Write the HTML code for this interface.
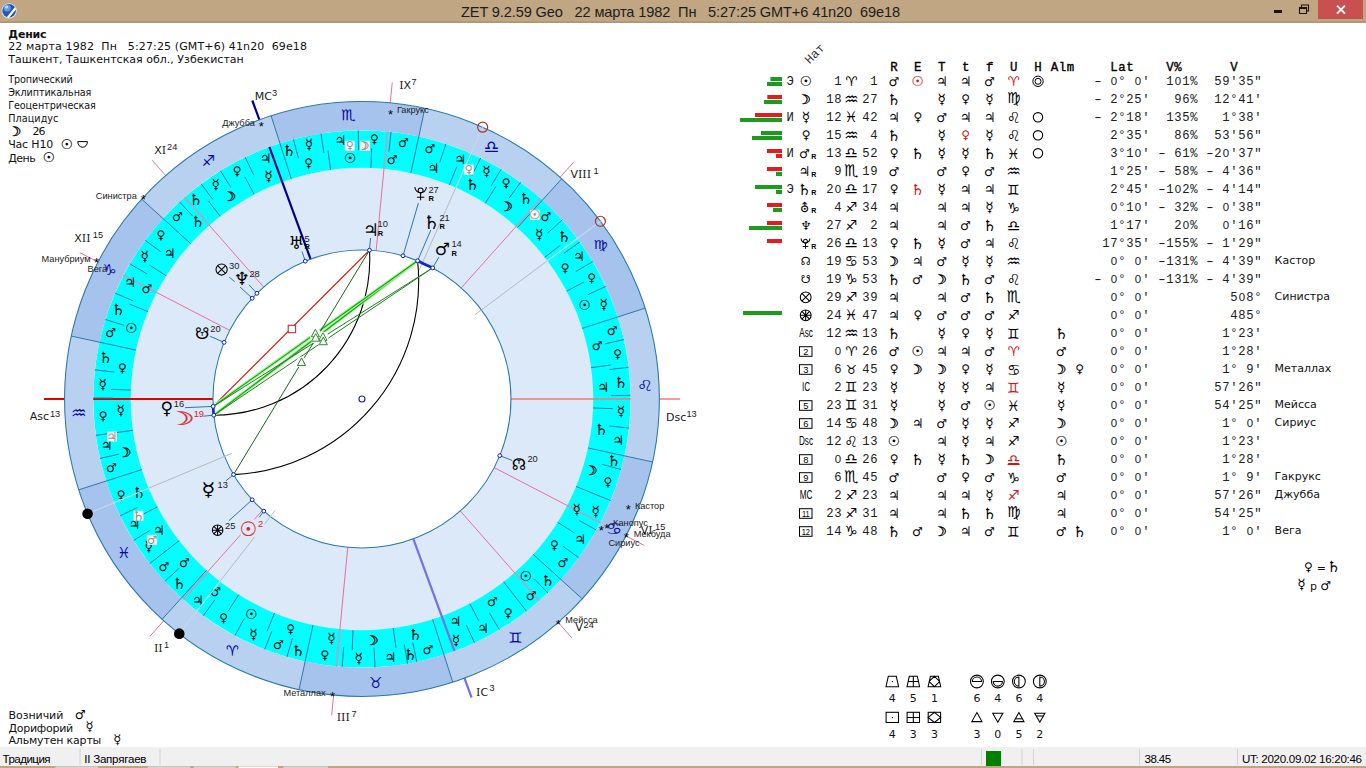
<!DOCTYPE html>
<html lang="ru"><head><meta charset="utf-8"><title>ZET 9.2.59 Geo</title>
<style>html,body{margin:0;padding:0;background:#fff;overflow:hidden}body{width:1366px;height:768px;position:relative}svg{position:absolute;left:0;top:0;display:block}text{white-space:pre}</style>
</head><body>
<svg width="1366" height="768" viewBox="0 0 1366 768">
<rect x="0" y="0" width="1366" height="768" fill="#fff"/>
<g id="wheel">
<circle cx="361.95" cy="399" r="268.6" fill="#00ffff"/>
<circle cx="361.95" cy="399" r="231.3" fill="#dce9f9"/>
<circle cx="361.95" cy="399" r="149" fill="#fff"/>
<line x1="212.95" y1="399" x2="43.95" y2="399" stroke="#e00000" stroke-width="2"/>
<line x1="262.67" y1="510.1" x2="150.06" y2="636.12" stroke="#e8709c" stroke-width="1"/>
<line x1="207.83" y1="571.47" x2="182.98" y2="599.29" stroke="#8fb4d0" stroke-width="2.1"/>
<line x1="347.76" y1="547.32" x2="331.66" y2="715.55" stroke="#e8709c" stroke-width="1"/>
<line x1="339.91" y1="629.25" x2="336.36" y2="666.38" stroke="#8fb4d0" stroke-width="2.1"/>
<line x1="413.32" y1="538.87" x2="471.58" y2="697.5" stroke="#7474e0" stroke-width="2.2"/>
<line x1="460.29" y1="510.94" x2="571.83" y2="637.9" stroke="#e8709c" stroke-width="1"/>
<line x1="514.61" y1="572.77" x2="539.23" y2="600.79" stroke="#8fb4d0" stroke-width="2.1"/>
<line x1="494.21" y1="467.61" x2="644.23" y2="545.43" stroke="#e8709c" stroke-width="1"/>
<line x1="567.27" y1="505.5" x2="600.38" y2="522.68" stroke="#8fb4d0" stroke-width="2.1"/>
<line x1="510.95" y1="399" x2="679.95" y2="399" stroke="#f07878" stroke-width="1.6"/>
<line x1="461.23" y1="287.9" x2="573.84" y2="161.88" stroke="#e8709c" stroke-width="1"/>
<line x1="516.07" y1="226.53" x2="540.92" y2="198.71" stroke="#8fb4d0" stroke-width="2.1"/>
<line x1="376.14" y1="250.68" x2="392.24" y2="82.45" stroke="#e8709c" stroke-width="1"/>
<line x1="383.99" y1="168.75" x2="387.54" y2="131.62" stroke="#8fb4d0" stroke-width="2.1"/>
<line x1="310.58" y1="259.13" x2="252.32" y2="100.5" stroke="#00008c" stroke-width="2.2"/>
<line x1="263.61" y1="287.06" x2="152.07" y2="160.1" stroke="#e8709c" stroke-width="1"/>
<line x1="209.29" y1="225.23" x2="184.67" y2="197.21" stroke="#8fb4d0" stroke-width="2.1"/>
<line x1="229.69" y1="330.39" x2="79.67" y2="252.57" stroke="#e8709c" stroke-width="1"/>
<line x1="156.63" y1="292.5" x2="123.52" y2="275.32" stroke="#8fb4d0" stroke-width="2.1"/>
<path d="M162.12 619.26A297.4 297.4 0 0 0 299.02 689.67L305.11 661.52A268.6 268.6 0 0 1 181.47 597.93Z" fill="#b9d1f1"/>
<path d="M299.02 689.67A297.4 297.4 0 0 0 452.78 682.19L443.99 654.77A268.6 268.6 0 0 1 305.11 661.52Z" fill="#a6c3ee"/>
<path d="M452.78 682.19A297.4 297.4 0 0 0 582.21 598.83L560.88 579.48A268.6 268.6 0 0 1 443.99 654.77Z" fill="#b9d1f1"/>
<path d="M582.21 598.83A297.4 297.4 0 0 0 652.62 461.93L624.47 455.84A268.6 268.6 0 0 1 560.88 579.48Z" fill="#a6c3ee"/>
<path d="M652.62 461.93A297.4 297.4 0 0 0 645.14 308.17L617.72 316.96A268.6 268.6 0 0 1 624.47 455.84Z" fill="#b9d1f1"/>
<path d="M645.14 308.17A297.4 297.4 0 0 0 561.78 178.74L542.43 200.07A268.6 268.6 0 0 1 617.72 316.96Z" fill="#a6c3ee"/>
<path d="M561.78 178.74A297.4 297.4 0 0 0 424.88 108.33L418.79 136.48A268.6 268.6 0 0 1 542.43 200.07Z" fill="#b9d1f1"/>
<path d="M424.88 108.33A297.4 297.4 0 0 0 271.12 115.81L279.91 143.23A268.6 268.6 0 0 1 418.79 136.48Z" fill="#a6c3ee"/>
<path d="M271.12 115.81A297.4 297.4 0 0 0 141.69 199.17L163.02 218.52A268.6 268.6 0 0 1 279.91 143.23Z" fill="#b9d1f1"/>
<path d="M141.69 199.17A297.4 297.4 0 0 0 71.28 336.07L99.43 342.16A268.6 268.6 0 0 1 163.02 218.52Z" fill="#a6c3ee"/>
<path d="M71.28 336.07A297.4 297.4 0 0 0 78.76 489.83L106.18 481.04A268.6 268.6 0 0 1 99.43 342.16Z" fill="#b9d1f1"/>
<path d="M78.76 489.83A297.4 297.4 0 0 0 162.12 619.26L181.47 597.93A268.6 268.6 0 0 1 106.18 481.04Z" fill="#a6c3ee"/>
<circle cx="361.95" cy="399" r="297.4" fill="none" stroke="#2a78a8" stroke-width="1.05"/>
<circle cx="361.95" cy="399" r="149" fill="none" stroke="#2a78a8" stroke-width="1.05"/>
<line x1="206.53" y1="570.3" x2="162.12" y2="619.26" stroke="#2a78a8" stroke-width="1"/>
<line x1="313" y1="625.06" x2="299.02" y2="689.67" stroke="#2a78a8" stroke-width="1"/>
<line x1="432.59" y1="619.25" x2="452.78" y2="682.19" stroke="#2a78a8" stroke-width="1"/>
<line x1="533.25" y1="554.42" x2="582.21" y2="598.83" stroke="#2a78a8" stroke-width="1"/>
<line x1="588.01" y1="447.95" x2="652.62" y2="461.93" stroke="#2a78a8" stroke-width="1"/>
<line x1="582.2" y1="328.36" x2="645.14" y2="308.17" stroke="#2a78a8" stroke-width="1"/>
<line x1="517.37" y1="227.7" x2="561.78" y2="178.74" stroke="#2a78a8" stroke-width="1"/>
<line x1="410.9" y1="172.94" x2="424.88" y2="108.33" stroke="#2a78a8" stroke-width="1"/>
<line x1="291.31" y1="178.75" x2="271.12" y2="115.81" stroke="#2a78a8" stroke-width="1"/>
<line x1="190.65" y1="243.58" x2="141.69" y2="199.17" stroke="#2a78a8" stroke-width="1"/>
<line x1="135.89" y1="350.05" x2="71.28" y2="336.07" stroke="#2a78a8" stroke-width="1"/>
<line x1="141.7" y1="469.64" x2="78.76" y2="489.83" stroke="#2a78a8" stroke-width="1"/>
<line x1="214.83" y1="599.89" x2="203.25" y2="615.7" stroke="#2a78a8" stroke-width="1"/>
<line x1="244.22" y1="618.41" x2="234.95" y2="635.68" stroke="#2a78a8" stroke-width="1"/>
<line x1="271.84" y1="631.12" x2="264.74" y2="649.39" stroke="#2a78a8" stroke-width="1"/>
<line x1="292.41" y1="638.09" x2="286.94" y2="656.91" stroke="#2a78a8" stroke-width="1"/>
<line x1="238.64" y1="594.69" x2="228.14" y2="611.36" stroke="#2a78a8" stroke-width="1"/>
<line x1="274.49" y1="613.13" x2="267.04" y2="631.37" stroke="#2a78a8" stroke-width="1"/>
<line x1="343.64" y1="647.33" x2="342.2" y2="666.87" stroke="#2a78a8" stroke-width="1"/>
<line x1="374.04" y1="647.71" x2="374.99" y2="667.28" stroke="#2a78a8" stroke-width="1"/>
<line x1="404.26" y1="644.38" x2="407.59" y2="663.69" stroke="#2a78a8" stroke-width="1"/>
<line x1="412.8" y1="642.75" x2="416.8" y2="661.94" stroke="#2a78a8" stroke-width="1"/>
<line x1="353" y1="630.13" x2="352.24" y2="649.81" stroke="#2a78a8" stroke-width="1"/>
<line x1="393.27" y1="628.17" x2="395.94" y2="647.69" stroke="#2a78a8" stroke-width="1"/>
<line x1="466.33" y1="625.07" x2="474.54" y2="642.86" stroke="#2a78a8" stroke-width="1"/>
<line x1="489.39" y1="612.92" x2="499.42" y2="629.76" stroke="#2a78a8" stroke-width="1"/>
<line x1="514.51" y1="595.79" x2="526.52" y2="611.28" stroke="#2a78a8" stroke-width="1"/>
<line x1="534.24" y1="578.77" x2="547.8" y2="592.92" stroke="#2a78a8" stroke-width="1"/>
<line x1="469.77" y1="603.63" x2="478.95" y2="621.06" stroke="#2a78a8" stroke-width="1"/>
<line x1="503.66" y1="581.8" x2="515.73" y2="597.37" stroke="#2a78a8" stroke-width="1"/>
<line x1="562.84" y1="546.12" x2="578.65" y2="557.7" stroke="#2a78a8" stroke-width="1"/>
<line x1="579.27" y1="520.54" x2="596.38" y2="530.11" stroke="#2a78a8" stroke-width="1"/>
<line x1="592.46" y1="493.15" x2="610.61" y2="500.56" stroke="#2a78a8" stroke-width="1"/>
<line x1="602.22" y1="464.35" x2="621.13" y2="469.5" stroke="#2a78a8" stroke-width="1"/>
<line x1="557.64" y1="522.31" x2="574.31" y2="532.81" stroke="#2a78a8" stroke-width="1"/>
<line x1="576.08" y1="486.46" x2="594.32" y2="493.91" stroke="#2a78a8" stroke-width="1"/>
<line x1="609.49" y1="425.96" x2="628.97" y2="428.09" stroke="#2a78a8" stroke-width="1"/>
<line x1="610.93" y1="395.6" x2="630.52" y2="395.33" stroke="#2a78a8" stroke-width="1"/>
<line x1="609.21" y1="369.59" x2="628.67" y2="367.27" stroke="#2a78a8" stroke-width="1"/>
<line x1="604.78" y1="343.91" x2="623.89" y2="339.57" stroke="#2a78a8" stroke-width="1"/>
<line x1="593.08" y1="407.95" x2="612.76" y2="408.71" stroke="#2a78a8" stroke-width="1"/>
<line x1="591.12" y1="367.68" x2="610.64" y2="365.01" stroke="#2a78a8" stroke-width="1"/>
<line x1="588.02" y1="294.62" x2="605.81" y2="286.41" stroke="#2a78a8" stroke-width="1"/>
<line x1="575.87" y1="271.56" x2="592.71" y2="261.53" stroke="#2a78a8" stroke-width="1"/>
<line x1="563.95" y1="253.4" x2="579.85" y2="241.94" stroke="#2a78a8" stroke-width="1"/>
<line x1="547.62" y1="233.09" x2="562.24" y2="220.03" stroke="#2a78a8" stroke-width="1"/>
<line x1="566.58" y1="291.18" x2="584.01" y2="282" stroke="#2a78a8" stroke-width="1"/>
<line x1="544.75" y1="257.29" x2="560.32" y2="245.22" stroke="#2a78a8" stroke-width="1"/>
<line x1="509.07" y1="198.11" x2="520.65" y2="182.3" stroke="#2a78a8" stroke-width="1"/>
<line x1="491" y1="186.05" x2="501.16" y2="169.29" stroke="#2a78a8" stroke-width="1"/>
<line x1="471.95" y1="175.61" x2="480.61" y2="158.03" stroke="#2a78a8" stroke-width="1"/>
<line x1="439.79" y1="162.48" x2="445.92" y2="143.86" stroke="#2a78a8" stroke-width="1"/>
<line x1="485.26" y1="203.31" x2="495.76" y2="186.64" stroke="#2a78a8" stroke-width="1"/>
<line x1="449.41" y1="184.87" x2="456.86" y2="166.63" stroke="#2a78a8" stroke-width="1"/>
<line x1="388.91" y1="151.46" x2="391.04" y2="131.98" stroke="#2a78a8" stroke-width="1"/>
<line x1="358.55" y1="150.02" x2="358.28" y2="130.43" stroke="#2a78a8" stroke-width="1"/>
<line x1="323.93" y1="152.92" x2="320.94" y2="133.55" stroke="#2a78a8" stroke-width="1"/>
<line x1="298.41" y1="158.24" x2="293.41" y2="139.29" stroke="#2a78a8" stroke-width="1"/>
<line x1="370.9" y1="167.87" x2="371.66" y2="148.19" stroke="#2a78a8" stroke-width="1"/>
<line x1="330.63" y1="169.83" x2="327.96" y2="150.31" stroke="#2a78a8" stroke-width="1"/>
<line x1="253.64" y1="174.79" x2="245.12" y2="157.14" stroke="#2a78a8" stroke-width="1"/>
<line x1="230.8" y1="187.34" x2="220.48" y2="170.68" stroke="#2a78a8" stroke-width="1"/>
<line x1="212.85" y1="199.57" x2="201.11" y2="183.88" stroke="#2a78a8" stroke-width="1"/>
<line x1="192.82" y1="216.25" x2="179.51" y2="201.87" stroke="#2a78a8" stroke-width="1"/>
<line x1="254.13" y1="194.37" x2="244.95" y2="176.94" stroke="#2a78a8" stroke-width="1"/>
<line x1="220.24" y1="216.2" x2="208.17" y2="200.63" stroke="#2a78a8" stroke-width="1"/>
<line x1="161.06" y1="251.88" x2="145.25" y2="240.3" stroke="#2a78a8" stroke-width="1"/>
<line x1="146.78" y1="273.69" x2="129.85" y2="263.82" stroke="#2a78a8" stroke-width="1"/>
<line x1="133.11" y1="300.84" x2="115.1" y2="293.12" stroke="#2a78a8" stroke-width="1"/>
<line x1="124.11" y1="325.3" x2="105.39" y2="319.5" stroke="#2a78a8" stroke-width="1"/>
<line x1="166.26" y1="275.69" x2="149.59" y2="265.19" stroke="#2a78a8" stroke-width="1"/>
<line x1="147.82" y1="311.54" x2="129.58" y2="304.09" stroke="#2a78a8" stroke-width="1"/>
<line x1="114.41" y1="372.04" x2="94.93" y2="369.91" stroke="#2a78a8" stroke-width="1"/>
<line x1="112.95" y1="398.06" x2="93.35" y2="397.98" stroke="#2a78a8" stroke-width="1"/>
<line x1="115.24" y1="432.72" x2="95.82" y2="435.38" stroke="#2a78a8" stroke-width="1"/>
<line x1="119.12" y1="454.09" x2="100.01" y2="458.43" stroke="#2a78a8" stroke-width="1"/>
<line x1="130.82" y1="390.05" x2="111.14" y2="389.29" stroke="#2a78a8" stroke-width="1"/>
<line x1="132.78" y1="430.32" x2="113.26" y2="432.99" stroke="#2a78a8" stroke-width="1"/>
<line x1="137.74" y1="507.31" x2="120.09" y2="515.83" stroke="#2a78a8" stroke-width="1"/>
<line x1="150.29" y1="530.15" x2="133.63" y2="540.47" stroke="#2a78a8" stroke-width="1"/>
<line x1="165.16" y1="551.56" x2="149.67" y2="563.57" stroke="#2a78a8" stroke-width="1"/>
<line x1="179.2" y1="568.13" x2="164.82" y2="581.44" stroke="#2a78a8" stroke-width="1"/>
<line x1="157.32" y1="506.82" x2="139.89" y2="516" stroke="#2a78a8" stroke-width="1"/>
<line x1="179.15" y1="540.71" x2="163.58" y2="552.78" stroke="#2a78a8" stroke-width="1"/>
<text x="191.97" y="604.87" font-family='"DejaVu Sans", sans-serif' font-size="13.2" fill="#000">♃</text>
<text x="219.28" y="622.12" font-family='"DejaVu Sans", sans-serif' font-size="11.8" fill="#000">♀</text>
<text x="249.15" y="639.14" font-family='"DejaVu Sans", sans-serif' font-size="14" fill="#000">☿</text>
<text x="273.08" y="649.12" font-family='"DejaVu Sans", sans-serif' font-size="12.3" fill="#000">♂</text>
<text x="291.28" y="656.21" font-family='"DejaVu Sans", sans-serif' font-size="15.5" fill="#000">♄</text>
<text x="210.29" y="595.66" font-family='"DejaVu Sans", sans-serif' font-size="12.3" fill="#000">♂</text>
<text x="245.36" y="618.77" font-family='"DejaVu Sans", sans-serif' font-size="13.7" fill="#000" stroke="#000" stroke-width="0.2">☉</text>
<text x="286.15" y="633.25" font-family='"DejaVu Sans", sans-serif' font-size="11.8" fill="#000">♀</text>
<text x="320.54" y="659.41" font-family='"DejaVu Sans", sans-serif' font-size="11.8" fill="#000">♀</text>
<text x="354.41" y="662.89" font-family='"DejaVu Sans", sans-serif' font-size="14" fill="#000">☿</text>
<text x="384.44" y="661.76" font-family='"DejaVu Sans", sans-serif' font-size="13.2" fill="#000">♃</text>
<text x="403.56" y="659.58" font-family='"DejaVu Sans", sans-serif' font-size="15.5" fill="#000">♄</text>
<text x="422.57" y="654.25" font-family='"DejaVu Sans", sans-serif' font-size="12.3" fill="#000">♂</text>
<text x="327.32" y="643" font-family='"DejaVu Sans", sans-serif' font-size="14" fill="#000">☿</text>
<text transform="translate(373.68 640.22) scale(1.3 1)" x="-7.62" y="4.74" font-family='"DejaVu Sans", sans-serif' font-size="13" fill="#000" stroke="#000" stroke-width="0.3">☽</text>
<text x="408.45" y="640.18" font-family='"DejaVu Sans", sans-serif' font-size="15.5" fill="#000">♄</text>
<text x="451.85" y="645.21" font-family='"DejaVu Sans", sans-serif' font-size="14" fill="#000">☿</text>
<text x="477" y="633.41" font-family='"DejaVu Sans", sans-serif' font-size="13.2" fill="#000">♃</text>
<text x="503.8" y="616.99" font-family='"DejaVu Sans", sans-serif' font-size="11.8" fill="#000">♀</text>
<text x="525.86" y="599.83" font-family='"DejaVu Sans", sans-serif' font-size="12.3" fill="#000">♂</text>
<text x="541" y="585.63" font-family='"DejaVu Sans", sans-serif' font-size="15.5" fill="#000">♄</text>
<text x="449.56" y="626.48" font-family='"DejaVu Sans", sans-serif' font-size="13.2" fill="#000">♃</text>
<text x="487.12" y="606.38" font-family='"DejaVu Sans", sans-serif' font-size="12.3" fill="#000">♂</text>
<text x="519.84" y="581.25" font-family='"DejaVu Sans", sans-serif' font-size="13.7" fill="#000" stroke="#000" stroke-width="0.2">☉</text>
<text x="557.41" y="567.41" font-family='"DejaVu Sans", sans-serif' font-size="12.3" fill="#000">♂</text>
<text x="574.37" y="544.08" font-family='"DejaVu Sans", sans-serif' font-size="13.2" fill="#000">♃</text>
<text x="591.45" y="516.02" font-family='"DejaVu Sans", sans-serif' font-size="14" fill="#000">☿</text>
<text x="603.41" y="485.85" font-family='"DejaVu Sans", sans-serif' font-size="11.8" fill="#000">♀</text>
<text x="607.11" y="466.19" font-family='"DejaVu Sans", sans-serif' font-size="15.5" fill="#000">♄</text>
<text x="549.95" y="548.64" font-family='"DejaVu Sans", sans-serif' font-size="11.8" fill="#000">♀</text>
<text x="572.42" y="513.86" font-family='"DejaVu Sans", sans-serif' font-size="14" fill="#000">☿</text>
<text transform="translate(592.63 470.48) scale(1.3 1)" x="-7.62" y="4.74" font-family='"DejaVu Sans", sans-serif' font-size="13" fill="#000" stroke="#000" stroke-width="0.3">☽</text>
<text x="612.19" y="445.38" font-family='"DejaVu Sans", sans-serif' font-size="13.2" fill="#000">♃</text>
<text x="616.86" y="415.71" font-family='"DejaVu Sans", sans-serif' font-size="14" fill="#000">☿</text>
<text x="613.94" y="387.54" font-family='"DejaVu Sans", sans-serif' font-size="15.5" fill="#000">♄</text>
<text x="613.35" y="358.48" font-family='"DejaVu Sans", sans-serif' font-size="11.8" fill="#000">♀</text>
<text x="606.68" y="334.94" font-family='"DejaVu Sans", sans-serif' font-size="12.3" fill="#000">♂</text>
<text x="594.6" y="435" font-family='"DejaVu Sans", sans-serif' font-size="15.5" fill="#000">♄</text>
<text x="597.25" y="392.09" font-family='"DejaVu Sans", sans-serif' font-size="13.2" fill="#000">♃</text>
<text x="591.87" y="349.91" font-family='"DejaVu Sans", sans-serif' font-size="12.3" fill="#000">♂</text>
<text x="599.45" y="309.22" font-family='"DejaVu Sans", sans-serif' font-size="14" fill="#000">☿</text>
<text x="587.21" y="281.61" font-family='"DejaVu Sans", sans-serif' font-size="11.8" fill="#000">♀</text>
<text x="572.97" y="261.41" font-family='"DejaVu Sans", sans-serif' font-size="13.2" fill="#000">♃</text>
<text x="557.3" y="242.12" font-family='"DejaVu Sans", sans-serif' font-size="15.5" fill="#000">♄</text>
<text x="540.54" y="220.54" font-family='"DejaVu Sans", sans-serif' font-size="12.3" fill="#000">♂</text>
<text x="578.47" y="310.48" font-family='"DejaVu Sans", sans-serif' font-size="13.7" fill="#000" stroke="#000" stroke-width="0.2">☉</text>
<text x="560.66" y="271.81" font-family='"DejaVu Sans", sans-serif' font-size="11.8" fill="#000">♀</text>
<text x="534.9" y="239.38" font-family='"DejaVu Sans", sans-serif' font-size="14" fill="#000">☿</text>
<text x="519.08" y="203.61" font-family='"DejaVu Sans", sans-serif' font-size="15.5" fill="#000">♄</text>
<text x="501.67" y="186.72" font-family='"DejaVu Sans", sans-serif' font-size="11.8" fill="#000">♀</text>
<text x="482.34" y="175.83" font-family='"DejaVu Sans", sans-serif' font-size="14" fill="#000">☿</text>
<text x="454.16" y="163.59" font-family='"DejaVu Sans", sans-serif' font-size="13.2" fill="#000">♃</text>
<text x="424.47" y="152.94" font-family='"DejaVu Sans", sans-serif' font-size="12.3" fill="#000">♂</text>
<text transform="translate(508.02 206.68) scale(1.3 1)" x="-7.62" y="4.74" font-family='"DejaVu Sans", sans-serif' font-size="13" fill="#000" stroke="#000" stroke-width="0.3">☽</text>
<text x="465.46" y="189.9" font-family='"DejaVu Sans", sans-serif' font-size="15.5" fill="#000">♄</text>
<text x="427.52" y="173.14" font-family='"DejaVu Sans", sans-serif' font-size="13.2" fill="#000">♃</text>
<text x="397.92" y="147.19" font-family='"DejaVu Sans", sans-serif' font-size="12.3" fill="#000">♂</text>
<text x="369.93" y="143.37" font-family='"DejaVu Sans", sans-serif' font-size="11.8" fill="#000">♀</text>
<text x="334.4" y="145.22" font-family='"DejaVu Sans", sans-serif' font-size="13.2" fill="#000">♃</text>
<text x="304.66" y="149.38" font-family='"DejaVu Sans", sans-serif' font-size="14" fill="#000">☿</text>
<text x="282.25" y="155.57" font-family='"DejaVu Sans", sans-serif' font-size="15.5" fill="#000">♄</text>
<text x="386.69" y="163.76" font-family='"DejaVu Sans", sans-serif' font-size="12.3" fill="#000">♂</text>
<text x="344.08" y="162.79" font-family='"DejaVu Sans", sans-serif' font-size="13.7" fill="#000" stroke="#000" stroke-width="0.2">☉</text>
<text x="304.19" y="167.06" font-family='"DejaVu Sans", sans-serif' font-size="11.8" fill="#000">♀</text>
<text x="259.74" y="162.85" font-family='"DejaVu Sans", sans-serif' font-size="13.2" fill="#000">♃</text>
<text x="232.68" y="175.14" font-family='"DejaVu Sans", sans-serif' font-size="11.8" fill="#000">♀</text>
<text x="211.48" y="189" font-family='"DejaVu Sans", sans-serif' font-size="14" fill="#000">☿</text>
<text x="188.96" y="205.24" font-family='"DejaVu Sans", sans-serif' font-size="15.5" fill="#000">♄</text>
<text x="171.96" y="220.76" font-family='"DejaVu Sans", sans-serif' font-size="12.3" fill="#000">♂</text>
<text x="264.13" y="180.76" font-family='"DejaVu Sans", sans-serif' font-size="14" fill="#000">☿</text>
<text transform="translate(231.19 195.97) scale(1.3 1)" x="-7.62" y="4.74" font-family='"DejaVu Sans", sans-serif' font-size="13" fill="#000" stroke="#000" stroke-width="0.3">☽</text>
<text x="190.98" y="227.42" font-family='"DejaVu Sans", sans-serif' font-size="15.5" fill="#000">♄</text>
<text x="156.58" y="238.51" font-family='"DejaVu Sans", sans-serif' font-size="11.8" fill="#000">♀</text>
<text x="140.55" y="261.26" font-family='"DejaVu Sans", sans-serif' font-size="14" fill="#000">☿</text>
<text x="124.24" y="287.16" font-family='"DejaVu Sans", sans-serif' font-size="13.2" fill="#000">♃</text>
<text x="111.5" y="314.99" font-family='"DejaVu Sans", sans-serif' font-size="15.5" fill="#000">♄</text>
<text x="105.37" y="337.42" font-family='"DejaVu Sans", sans-serif' font-size="12.3" fill="#000">♂</text>
<text x="163.72" y="257.75" font-family='"DejaVu Sans", sans-serif' font-size="13.2" fill="#000">♃</text>
<text x="141.59" y="292.89" font-family='"DejaVu Sans", sans-serif' font-size="12.3" fill="#000">♂</text>
<text x="125.13" y="332.52" font-family='"DejaVu Sans", sans-serif' font-size="13.7" fill="#000" stroke="#000" stroke-width="0.2">☉</text>
<text x="98.86" y="363.1" font-family='"DejaVu Sans", sans-serif' font-size="15.5" fill="#000">♄</text>
<text x="98.56" y="388.85" font-family='"DejaVu Sans", sans-serif' font-size="14" fill="#000">☿</text>
<text x="98.69" y="419.7" font-family='"DejaVu Sans", sans-serif' font-size="11.8" fill="#000">♀</text>
<text x="100.71" y="450.15" font-family='"DejaVu Sans", sans-serif' font-size="13.2" fill="#000">♃</text>
<text x="106.03" y="471.74" font-family='"DejaVu Sans", sans-serif' font-size="12.3" fill="#000">♂</text>
<text x="118.04" y="372.24" font-family='"DejaVu Sans", sans-serif' font-size="11.8" fill="#000">♀</text>
<text x="116.44" y="415.14" font-family='"DejaVu Sans", sans-serif' font-size="14" fill="#000">☿</text>
<text transform="translate(126.44 452.44) scale(1.3 1)" x="-7.62" y="4.74" font-family='"DejaVu Sans", sans-serif' font-size="13" fill="#000" stroke="#000" stroke-width="0.3">☽</text>
<text x="116.66" y="498.88" font-family='"DejaVu Sans", sans-serif' font-size="11.8" fill="#000">♀</text>
<text x="128.6" y="528.77" font-family='"DejaVu Sans", sans-serif' font-size="13.2" fill="#000">♃</text>
<text x="144.52" y="551.45" font-family='"DejaVu Sans", sans-serif' font-size="14" fill="#000">☿</text>
<text x="158.39" y="571.13" font-family='"DejaVu Sans", sans-serif' font-size="12.3" fill="#000">♂</text>
<text x="172.43" y="589.06" font-family='"DejaVu Sans", sans-serif' font-size="15.5" fill="#000">♄</text>
<text x="132.35" y="498.18" font-family='"DejaVu Sans", sans-serif' font-size="15.5" fill="#000">♄</text>
<text x="153" y="534.58" font-family='"DejaVu Sans", sans-serif' font-size="13.2" fill="#000">♃</text>
<text x="179.11" y="567.38" font-family='"DejaVu Sans", sans-serif' font-size="12.3" fill="#000">♂</text>
<text x="225.79" y="656.41" font-family='"DejaVu Sans", sans-serif' font-size="14.5" fill="#0a0a9a">♈</text>
<text x="368.99" y="687.64" font-family='"DejaVu Sans", sans-serif' font-size="15" fill="#0a0a9a">♉</text>
<text transform="translate(515.45 637.35) scale(1.1 1)" x="-6.72" y="5.49" font-family='"DejaVu Sans", sans-serif' font-size="15" fill="#0a0a9a">♊</text>
<text transform="translate(614.06 528.66) scale(1.2 1)" x="-6.95" y="5.51" font-family='"DejaVu Sans", sans-serif' font-size="15.5" fill="#0a0a9a">♋</text>
<text transform="translate(645.12 385.23) scale(1.2 1)" x="-6.94" y="5.66" font-family='"DejaVu Sans", sans-serif' font-size="15.5" fill="#0a0a9a">♌</text>
<text transform="translate(600.3 245.5) scale(1.3 1)" x="-5.6" y="3.44" font-family='"DejaVu Sans", sans-serif' font-size="12.5" fill="#0a0a9a">♍</text>
<text x="483.77" y="153.06" font-family='"DejaVu Sans", sans-serif' font-size="17.5" fill="#0a0a9a">♎</text>
<text transform="translate(348.18 115.83) scale(1.15 1)" x="-6.5" y="4.6" font-family='"DejaVu Sans", sans-serif' font-size="14.5" fill="#0a0a9a">♏</text>
<text x="201.73" y="166.13" font-family='"DejaVu Sans", sans-serif' font-size="15" fill="#0a0a9a">♐</text>
<text transform="translate(109.84 269.34) scale(1.05 1)" x="-6.72" y="5.48" font-family='"DejaVu Sans", sans-serif' font-size="15" fill="#0a0a9a">♑</text>
<text x="70.94" y="419.17" font-family='"DejaVu Sans", sans-serif' font-size="17.5" fill="#0a0a9a">♒</text>
<text x="116.88" y="557.98" font-family='"DejaVu Sans", sans-serif' font-size="15" fill="#0a0a9a">♓</text>
<line x1="419.19" y1="270.14" x2="455.84" y2="187.61" stroke="#b4b4b4" stroke-width="1" stroke-opacity="0.9"/>
<line x1="455.84" y1="187.61" x2="470.99" y2="153.53" stroke="#c4ecec" stroke-width="1.2"/>
<line x1="470.99" y1="153.53" x2="482.68" y2="127.21" stroke="#c8d6ea" stroke-width="1.1"/>
<circle cx="482.68" cy="127.21" r="5" fill="none" stroke="#b03030" stroke-width="1.2"/>
<line x1="475" y1="314.73" x2="547.4" y2="260.77" stroke="#b4b4b4" stroke-width="1" stroke-opacity="0.9"/>
<line x1="547.4" y1="260.77" x2="577.31" y2="238.48" stroke="#c4ecec" stroke-width="1.2"/>
<line x1="577.31" y1="238.48" x2="600.4" y2="221.27" stroke="#c8d6ea" stroke-width="1.1"/>
<circle cx="600.4" cy="221.27" r="5" fill="none" stroke="#b03030" stroke-width="1.2"/>
<line x1="231.87" y1="453.41" x2="148.57" y2="488.26" stroke="#b4b4b4" stroke-width="1" stroke-opacity="0.9"/>
<line x1="148.57" y1="488.26" x2="114.16" y2="502.65" stroke="#c4ecec" stroke-width="1.2"/>
<line x1="114.16" y1="502.65" x2="87.59" y2="513.77" stroke="#c8d6ea" stroke-width="1.1"/>
<circle cx="87.59" cy="513.77" r="5.3" fill="#000"/>
<line x1="275.34" y1="510.26" x2="219.87" y2="581.52" stroke="#b4b4b4" stroke-width="1" stroke-opacity="0.9"/>
<line x1="219.87" y1="581.52" x2="196.95" y2="610.95" stroke="#c4ecec" stroke-width="1.2"/>
<line x1="196.95" y1="610.95" x2="179.26" y2="633.67" stroke="#c8d6ea" stroke-width="1.1"/>
<circle cx="179.26" cy="633.67" r="5.3" fill="#000"/>
<rect x="344.9" y="140.8" width="9.8" height="10" fill="#f0fafa"/>
<text x="345.78" y="149.12" font-family='"DejaVu Sans", sans-serif' font-size="10.97" fill="#a08c8c">♀</text>
<rect x="360.1" y="140.8" width="9.8" height="10" fill="#f0fafa"/>
<text transform="translate(365 145.8) scale(1.3 1)" x="-7.08" y="4.41" font-family='"DejaVu Sans", sans-serif' font-size="12.09" fill="#a08c8c" stroke="#a08c8c" stroke-width="0.3">☽</text>
<rect x="463.9" y="164.6" width="9.8" height="10" fill="#f0fafa"/>
<text x="464.78" y="172.92" font-family='"DejaVu Sans", sans-serif' font-size="10.97" fill="#a08c8c">♀</text>
<rect x="529.9" y="209.8" width="9.8" height="10" fill="#f0fafa"/>
<text x="529.09" y="219.45" font-family='"DejaVu Sans", sans-serif' font-size="12.74" fill="#a08c8c" stroke="#a08c8c" stroke-width="0.2">☉</text>
<rect x="107.2" y="431.5" width="9.8" height="10" fill="#f0fafa"/>
<text x="106.6" y="440.98" font-family='"DejaVu Sans", sans-serif' font-size="12.28" fill="#a08c8c">♃</text>
<rect x="133.6" y="510.8" width="9.8" height="10" fill="#f0fafa"/>
<text x="132.05" y="521.06" font-family='"DejaVu Sans", sans-serif' font-size="14.42" fill="#a08c8c">♄</text>
<rect x="147.3" y="534.9" width="9.8" height="10" fill="#f0fafa"/>
<text x="147" y="543.94" font-family='"DejaVu Sans", sans-serif' font-size="11.44" fill="#a08c8c">♂</text>
<path d="M417.61 260.78A149 149 0 0 0 432.7 267.87" fill="none" stroke="#1428d0" stroke-width="2.7"/>
<path d="M213.13 406.41A149 149 0 0 0 213.83 415.18" fill="none" stroke="#1428d0" stroke-width="2.7"/>
<polyline points="305.29,261.19 302,251.5" fill="none" stroke="#2a78a8" stroke-width="1"/>
<polyline points="369.49,250.19 370.5,238" fill="none" stroke="#2a78a8" stroke-width="1"/>
<polyline points="403.02,255.77 418.4,203" fill="none" stroke="#2a78a8" stroke-width="1"/>
<polyline points="417.61,260.78 430.8,230" fill="none" stroke="#2a78a8" stroke-width="1"/>
<polyline points="432.7,267.87 438.9,257.1" fill="none" stroke="#2a78a8" stroke-width="1"/>
<polyline points="256.93,293.3 249,284.9" fill="none" stroke="#2a78a8" stroke-width="1"/>
<polyline points="252.21,298.21 240,287" fill="none" stroke="#2a78a8" stroke-width="1"/>
<polyline points="224.13,342.38 210.2,336.3" fill="none" stroke="#2a78a8" stroke-width="1"/>
<polyline points="213.13,406.41 185,407.7" fill="none" stroke="#2a78a8" stroke-width="1"/>
<polyline points="213.83,415.18 203.2,416.2" fill="none" stroke="#2a78a8" stroke-width="1"/>
<polyline points="233.55,474.59 226,480.8" fill="none" stroke="#2a78a8" stroke-width="1"/>
<polyline points="252.21,499.79 228.9,520.7" fill="none" stroke="#2a78a8" stroke-width="1"/>
<polyline points="263.81,511.11 259.2,517.3" fill="none" stroke="#2a78a8" stroke-width="1"/>
<polyline points="499.77,455.62 512.1,460.4" fill="none" stroke="#2a78a8" stroke-width="1"/>
<line x1="234.6" y1="281.6" x2="229.2" y2="277.1" stroke="#2a78a8" stroke-width="1"/>
<text x="288.26" y="248.89" font-family='"DejaVu Sans", sans-serif' font-size="17.5" fill="#000">♅</text>
<text x="304.5" y="241.7" font-family='"Liberation Sans", sans-serif' font-size="9.3" fill="#1a1a1a">5</text>
<text x="304.5" y="249.3" font-family='"Liberation Sans", sans-serif' font-size="7.5" fill="#000" font-weight="bold">R</text>
<text x="362.96" y="235.69" font-family='"DejaVu Sans", sans-serif' font-size="17.5" fill="#000">♃</text>
<text x="377.6" y="227.1" font-family='"Liberation Sans", sans-serif' font-size="9.3" fill="#1a1a1a">10</text>
<text x="377.8" y="235.6" font-family='"Liberation Sans", sans-serif' font-size="7.5" fill="#000" font-weight="bold">R</text>
<g transform="translate(420.6 193.8) scale(1.3)" fill="none" stroke="#000" stroke-width="0.81"><circle cx="0" cy="-2.6" r="1.9"/><path d="M-4.4 -5.2a4.4 4.4 0 0 0 8.8 0M0 -0.7v5.6M-2.8 2.6h5.6"/></g>
<text x="428.4" y="192.7" font-family='"Liberation Sans", sans-serif' font-size="9.3" fill="#1a1a1a">27</text>
<text x="428.6" y="200.7" font-family='"Liberation Sans", sans-serif' font-size="7.5" fill="#000" font-weight="bold">R</text>
<text x="422.99" y="228.94" font-family='"DejaVu Sans", sans-serif' font-size="19" fill="#000">♄</text>
<text x="439.4" y="220.5" font-family='"Liberation Sans", sans-serif' font-size="9.3" fill="#1a1a1a">21</text>
<text x="439.6" y="228.6" font-family='"Liberation Sans", sans-serif' font-size="7.5" fill="#000" font-weight="bold">R</text>
<text x="434.77" y="255" font-family='"DejaVu Sans", sans-serif' font-size="17" fill="#000">♂</text>
<text x="451.4" y="247.3" font-family='"Liberation Sans", sans-serif' font-size="9.3" fill="#1a1a1a">14</text>
<text x="451.6" y="255.7" font-family='"Liberation Sans", sans-serif' font-size="7.5" fill="#000" font-weight="bold">R</text>
<g stroke="#000" stroke-width="1.05" fill="none"><circle cx="221.6" cy="269.5" r="5.6"/><path d="M217.64 265.54l7.92 7.92M225.56 265.54l-7.92 7.92"/></g>
<text x="229" y="268.6" font-family='"Liberation Sans", sans-serif' font-size="9.3" fill="#1a1a1a">30</text>
<text x="233.74" y="284.57" font-family='"DejaVu Sans", sans-serif' font-size="18" fill="#000">♆</text>
<text x="249.4" y="276.7" font-family='"Liberation Sans", sans-serif' font-size="9.3" fill="#1a1a1a">28</text>
<text x="194.9" y="339.16" font-family='"DejaVu Sans", sans-serif' font-size="16.2" fill="#000">☋</text>
<text x="210.3" y="331.6" font-family='"Liberation Sans", sans-serif' font-size="9.3" fill="#1a1a1a">20</text>
<text x="202.1" y="336.2" font-family='"Liberation Sans", sans-serif' font-size="5.5" fill="#000" text-anchor="middle" font-weight="bold">T</text>
<text x="160.4" y="414.11" font-family='"DejaVu Sans", sans-serif' font-size="17.2" fill="#000">♀</text>
<text x="173.8" y="407.3" font-family='"Liberation Sans", sans-serif' font-size="9.3" fill="#1a1a1a">16</text>
<text transform="translate(184.4 417.7) scale(1.75 1)" x="-11.02" y="6.86" font-family='"DejaVu Sans", sans-serif' font-size="18.8" fill="#e02020" stroke="#e02020" stroke-width="0.25">☽</text>
<text x="193.7" y="416.6" font-family='"Liberation Sans", sans-serif' font-size="9.3" fill="#e02020">19</text>
<text transform="translate(208.3 489.7) scale(1.25 1)" x="-5.71" y="5.86" font-family='"DejaVu Sans", sans-serif' font-size="18.6" fill="#000">☿</text>
<text x="217.6" y="488.1" font-family='"Liberation Sans", sans-serif' font-size="9.3" fill="#1a1a1a">13</text>
<g stroke="#000" stroke-width="1.05" fill="none"><circle cx="217.6" cy="530.2" r="5.3"/><path d="M212.3 530.2h10.6M217.6 524.9v10.6M213.85 526.45l7.49 7.49M221.35 526.45l-7.49 7.49"/></g>
<text x="225.1" y="528.8" font-family='"Liberation Sans", sans-serif' font-size="9.3" fill="#1a1a1a">25</text>
<rect x="240.5" y="519.5" width="24" height="17.5" fill="#dce9f9"/>
<text x="239.77" y="535.6" font-family='"DejaVu Sans", sans-serif' font-size="19.7" fill="#e02020" stroke="#e02020" stroke-width="0.1">☉</text>
<text x="257.9" y="526.6" font-family='"Liberation Sans", sans-serif' font-size="9.3" fill="#e02020">2</text>
<text x="511.8" y="470.09" font-family='"DejaVu Sans", sans-serif' font-size="16.2" fill="#000">☊</text>
<text x="527.4" y="462.4" font-family='"Liberation Sans", sans-serif' font-size="9.3" fill="#1a1a1a">20</text>
<text x="519" y="463.6" font-family='"Liberation Sans", sans-serif' font-size="5.5" fill="#000" text-anchor="middle" font-weight="bold">T</text>
<path d="M369.49 250.19A155.83 155.83 0 0 1 213.83 415.18" fill="none" stroke="#000" stroke-width="1.1"/>
<path d="M417.61 260.78A193.81 193.81 0 0 1 233.55 474.59" fill="none" stroke="#000" stroke-width="1.1"/>
<line x1="369.49" y1="250.19" x2="213.13" y2="406.41" stroke="#c02818" stroke-width="1.25"/>
<line x1="417.61" y1="260.78" x2="213.83" y2="415.18" stroke="#a8f49c" stroke-width="3.2"/>
<line x1="417.61" y1="260.78" x2="213.83" y2="415.18" stroke="#10a010" stroke-width="1.1"/>
<line x1="417.61" y1="260.78" x2="213.13" y2="406.41" stroke="#a8f49c" stroke-width="3.2"/>
<line x1="417.61" y1="260.78" x2="213.13" y2="406.41" stroke="#10a010" stroke-width="1.1"/>
<line x1="432.7" y1="267.87" x2="213.13" y2="406.41" stroke="#208020" stroke-width="1"/>
<line x1="432.7" y1="267.87" x2="213.83" y2="415.18" stroke="#208020" stroke-width="1"/>
<line x1="369.49" y1="250.19" x2="233.55" y2="474.59" stroke="#1c641c" stroke-width="1"/>
<rect x="288.21" y="325.3" width="7.4" height="7.4" fill="#fff" stroke="#c03030" stroke-width="1.1"/>
<circle cx="315.37" cy="333.6" r="5.6" fill="#fff"/>
<circle cx="315.72" cy="337.98" r="5.6" fill="#fff"/>
<circle cx="322.92" cy="337.14" r="5.6" fill="#fff"/>
<circle cx="323.27" cy="341.52" r="5.6" fill="#fff"/>
<circle cx="301.52" cy="362.39" r="5.6" fill="#fff"/>
<path d="M315.37 329.2L319.47 336.8L311.27 336.8Z" fill="#fff" stroke="#2c8c2c" stroke-width="1"/>
<path d="M315.72 333.58L319.82 341.18L311.62 341.18Z" fill="#fff" stroke="#2c8c2c" stroke-width="1"/>
<path d="M322.92 332.74L327.02 340.34L318.82 340.34Z" fill="#fff" stroke="#2c8c2c" stroke-width="1"/>
<path d="M323.27 337.12L327.37 344.72L319.17 344.72Z" fill="#fff" stroke="#2c8c2c" stroke-width="1"/>
<path d="M301.52 357.99L305.62 365.59L297.42 365.59Z" fill="#fff" stroke="#2c7c2c" stroke-width="1"/>
<circle cx="263.81" cy="511.11" r="1.9" fill="#fff" stroke="#1020b0" stroke-width="1"/>
<circle cx="213.83" cy="415.18" r="1.9" fill="#fff" stroke="#1020b0" stroke-width="1"/>
<circle cx="233.55" cy="474.59" r="1.9" fill="#fff" stroke="#1020b0" stroke-width="1"/>
<circle cx="213.13" cy="406.41" r="1.9" fill="#fff" stroke="#1020b0" stroke-width="1"/>
<circle cx="432.7" cy="267.87" r="1.9" fill="#fff" stroke="#1020b0" stroke-width="1"/>
<circle cx="369.49" cy="250.19" r="1.9" fill="#fff" stroke="#1020b0" stroke-width="1"/>
<circle cx="417.61" cy="260.78" r="1.9" fill="#fff" stroke="#1020b0" stroke-width="1"/>
<circle cx="305.29" cy="261.19" r="1.9" fill="#fff" stroke="#1020b0" stroke-width="1"/>
<circle cx="256.93" cy="293.3" r="1.9" fill="#fff" stroke="#1020b0" stroke-width="1"/>
<circle cx="403.02" cy="255.77" r="1.9" fill="#fff" stroke="#1020b0" stroke-width="1"/>
<circle cx="499.77" cy="455.62" r="1.9" fill="#fff" stroke="#1020b0" stroke-width="1"/>
<circle cx="224.13" cy="342.38" r="1.9" fill="#fff" stroke="#1020b0" stroke-width="1"/>
<circle cx="252.21" cy="298.21" r="1.9" fill="#fff" stroke="#1020b0" stroke-width="1"/>
<circle cx="252.21" cy="499.79" r="1.9" fill="#fff" stroke="#1020b0" stroke-width="1"/>
<circle cx="361.95" cy="399" r="3" fill="#fff" stroke="#202090" stroke-width="1.1"/>
<text x="254.8" y="99.5" font-family='"DejaVu Sans", "Liberation Sans", sans-serif' font-size="11" fill="#1a1a1a">MC</text>
<text x="272" y="96" font-family='"Liberation Sans", sans-serif' font-size="9.2" fill="#1a1a1a">3</text>
<text x="399.2" y="89.1" font-family='"DejaVu Sans", "Liberation Sans", sans-serif' font-size="11" fill="#1a1a1a"><tspan font-family='"DejaVu Serif", "Liberation Serif", serif'>I</tspan>X</text>
<text x="411.4" y="84.9" font-family='"Liberation Sans", sans-serif' font-size="9.2" fill="#1a1a1a">7</text>
<text x="570.4" y="178.2" font-family='"DejaVu Sans", "Liberation Sans", sans-serif' font-size="11" fill="#1a1a1a">V<tspan font-family='"DejaVu Serif", "Liberation Serif", serif'>I</tspan><tspan font-family='"DejaVu Serif", "Liberation Serif", serif'>I</tspan><tspan font-family='"DejaVu Serif", "Liberation Serif", serif'>I</tspan></text>
<text x="593.6" y="174" font-family='"Liberation Sans", sans-serif' font-size="9.2" fill="#1a1a1a">1</text>
<text x="666" y="420.5" font-family='"DejaVu Sans", "Liberation Sans", sans-serif' font-size="11" fill="#1a1a1a">Dsc</text>
<text x="686.4" y="416.5" font-family='"Liberation Sans", sans-serif' font-size="9.2" fill="#1a1a1a">13</text>
<text x="640.8" y="533.9" font-family='"DejaVu Sans", "Liberation Sans", sans-serif' font-size="11" fill="#1a1a1a">V<tspan font-family='"DejaVu Serif", "Liberation Serif", serif'>I</tspan></text>
<text x="655.1" y="530.4" font-family='"Liberation Sans", sans-serif' font-size="9.2" fill="#1a1a1a">15</text>
<text x="575.2" y="631.2" font-family='"DejaVu Sans", "Liberation Sans", sans-serif' font-size="11" fill="#1a1a1a">V</text>
<text x="583.6" y="627.6" font-family='"Liberation Sans", sans-serif' font-size="9.2" fill="#1a1a1a">24</text>
<text x="476.1" y="695.5" font-family='"DejaVu Sans", "Liberation Sans", sans-serif' font-size="11" fill="#1a1a1a"><tspan font-family='"DejaVu Serif", "Liberation Serif", serif'>I</tspan>C</text>
<text x="489.5" y="691.4" font-family='"Liberation Sans", sans-serif' font-size="9.2" fill="#1a1a1a">3</text>
<text x="336.7" y="721.3" font-family='"DejaVu Sans", "Liberation Sans", sans-serif' font-size="11" fill="#1a1a1a"><tspan font-family='"DejaVu Serif", "Liberation Serif", serif'>I</tspan><tspan font-family='"DejaVu Serif", "Liberation Serif", serif'>I</tspan><tspan font-family='"DejaVu Serif", "Liberation Serif", serif'>I</tspan></text>
<text x="351.5" y="716.9" font-family='"Liberation Sans", sans-serif' font-size="9.2" fill="#1a1a1a">7</text>
<text x="154" y="651.6" font-family='"DejaVu Sans", "Liberation Sans", sans-serif' font-size="11" fill="#1a1a1a"><tspan font-family='"DejaVu Serif", "Liberation Serif", serif'>I</tspan><tspan font-family='"DejaVu Serif", "Liberation Serif", serif'>I</tspan></text>
<text x="164" y="648" font-family='"Liberation Sans", sans-serif' font-size="9.2" fill="#1a1a1a">1</text>
<text x="29.7" y="419.5" font-family='"DejaVu Sans", "Liberation Sans", sans-serif' font-size="11" fill="#1a1a1a">Asc</text>
<text x="50" y="416.8" font-family='"Liberation Sans", sans-serif' font-size="9.2" fill="#1a1a1a">13</text>
<text x="74.3" y="242" font-family='"DejaVu Sans", "Liberation Sans", sans-serif' font-size="11" fill="#1a1a1a">X<tspan font-family='"DejaVu Serif", "Liberation Serif", serif'>I</tspan><tspan font-family='"DejaVu Serif", "Liberation Serif", serif'>I</tspan></text>
<text x="92.8" y="238.3" font-family='"Liberation Sans", sans-serif' font-size="9.2" fill="#1a1a1a">15</text>
<text x="154.3" y="153.7" font-family='"DejaVu Sans", "Liberation Sans", sans-serif' font-size="11" fill="#1a1a1a">X<tspan font-family='"DejaVu Serif", "Liberation Serif", serif'>I</tspan></text>
<text x="167.1" y="149.8" font-family='"Liberation Sans", sans-serif' font-size="9.2" fill="#1a1a1a">24</text>
<text x="261.3" y="131.2" font-family='"Liberation Sans", sans-serif' font-size="13" fill="#000" text-anchor="middle">*</text>
<text x="254.8" y="125.6" font-family='"Liberation Sans", sans-serif' font-size="9.2" fill="#222" text-anchor="end">Джубба</text>
<text x="390.5" y="118.5" font-family='"Liberation Sans", sans-serif' font-size="13" fill="#000" text-anchor="middle">*</text>
<text x="396.9" y="113" font-family='"Liberation Sans", sans-serif' font-size="9.2" fill="#222">Гакрукс</text>
<text x="143.3" y="203.9" font-family='"Liberation Sans", sans-serif' font-size="13" fill="#000" text-anchor="middle">*</text>
<text x="136.8" y="198.5" font-family='"Liberation Sans", sans-serif' font-size="9.2" fill="#222" text-anchor="end">Синистра</text>
<text x="96.5" y="266.7" font-family='"Liberation Sans", sans-serif' font-size="13" fill="#000" text-anchor="middle">*</text>
<text x="90.5" y="261.5" font-family='"Liberation Sans", sans-serif' font-size="9.2" fill="#222" text-anchor="end">Манубриум</text>
<text x="87.5" y="272.3" font-family='"Liberation Sans", sans-serif' font-size="9.2" fill="#222">Вега</text>
<text x="628.4" y="514.3" font-family='"Liberation Sans", sans-serif' font-size="13" fill="#000" text-anchor="middle">*</text>
<text x="634.9" y="508.8" font-family='"Liberation Sans", sans-serif' font-size="9.2" fill="#222">Кастор</text>
<text x="601.4" y="534.9" font-family='"Liberation Sans", sans-serif' font-size="13" fill="#000" text-anchor="middle">*</text>
<text x="606.8" y="533.1" font-family='"Liberation Sans", sans-serif' font-size="13" fill="#000" text-anchor="middle">*</text>
<text x="613.1" y="526.4" font-family='"Liberation Sans", sans-serif' font-size="9.2" fill="#222">Канопус</text>
<text x="626.2" y="542.4" font-family='"Liberation Sans", sans-serif' font-size="13" fill="#000" text-anchor="middle">*</text>
<text x="633.7" y="537.4" font-family='"Liberation Sans", sans-serif' font-size="9.2" fill="#222">Мекбуда</text>
<text x="608.4" y="546.1" font-family='"Liberation Sans", sans-serif' font-size="9.2" fill="#222">Сириус</text>
<text x="558.3" y="628.7" font-family='"Liberation Sans", sans-serif' font-size="13" fill="#000" text-anchor="middle">*</text>
<text x="565.3" y="623.4" font-family='"Liberation Sans", sans-serif' font-size="9.2" fill="#222">Мейсса</text>
<text x="332.6" y="701.1" font-family='"Liberation Sans", sans-serif' font-size="13" fill="#000" text-anchor="middle">*</text>
<text x="325.6" y="695.5" font-family='"Liberation Sans", sans-serif' font-size="9.2" fill="#222" text-anchor="end">Металлах</text>
</g>
<g id="info">
<text x="8.3" y="38" font-family='"DejaVu Sans", "Liberation Sans", sans-serif' font-size="11" fill="#111" font-weight="bold" textLength="38.3" lengthAdjust="spacing">Денис</text>
<text x="8.2" y="50" font-family='"DejaVu Sans", "Liberation Sans", sans-serif' font-size="11" fill="#111" textLength="298.7" lengthAdjust="spacing">22 марта 1982  Пн   5:27:25 (GMT+6) 41n20  69e18</text>
<text x="8.2" y="63" font-family='"DejaVu Sans", "Liberation Sans", sans-serif' font-size="11" fill="#111" textLength="235.6" lengthAdjust="spacing">Ташкент, Ташкентская обл., Узбекистан</text>
<text x="8.2" y="83.1" font-family='"DejaVu Sans", "Liberation Sans", sans-serif' font-size="9.6" fill="#111" textLength="64.6" lengthAdjust="spacing">Тропический</text>
<text x="8.2" y="95.9" font-family='"DejaVu Sans", "Liberation Sans", sans-serif' font-size="9.6" fill="#111" textLength="83.2" lengthAdjust="spacing">Эклиптикальная</text>
<text x="8.2" y="108.9" font-family='"DejaVu Sans", "Liberation Sans", sans-serif' font-size="9.6" fill="#111" textLength="87.6" lengthAdjust="spacing">Геоцентрическая</text>
<text x="8.2" y="121.9" font-family='"DejaVu Sans", "Liberation Sans", sans-serif' font-size="9.6" fill="#111" textLength="50.2" lengthAdjust="spacing">Плацидус</text>
<text transform="translate(16.3 131.4) scale(1.3 1)" x="-7.62" y="4.74" font-family='"DejaVu Sans", sans-serif' font-size="13" fill="#000" stroke="#000" stroke-width="0.3">☽</text>
<text x="32.5" y="135.2" font-family='"DejaVu Sans", "Liberation Sans", sans-serif' font-size="11" fill="#111" textLength="13.1" lengthAdjust="spacing">26</text>
<text x="8.2" y="148.4" font-family='"DejaVu Sans", "Liberation Sans", sans-serif' font-size="11" fill="#111" textLength="45" lengthAdjust="spacing">Час H10</text>
<text x="60.85" y="148.83" font-family='"DejaVu Sans", sans-serif' font-size="13.5" fill="#000" stroke="#000" stroke-width="0.2">☉</text>
<path d="M77.8 141.6h9.6c0 3.4-2 5.6-4.8 5.6s-4.8-2.2-4.8-5.6z" fill="none" stroke="#000" stroke-width="1"/>
<text x="8.2" y="161.5" font-family='"DejaVu Sans", "Liberation Sans", sans-serif' font-size="11" fill="#111" textLength="27.5" lengthAdjust="spacing">День</text>
<text x="42.75" y="162.13" font-family='"DejaVu Sans", sans-serif' font-size="13.5" fill="#000" stroke="#000" stroke-width="0.2">☉</text>
<text x="8.5" y="718.7" font-family='"DejaVu Sans", "Liberation Sans", sans-serif' font-size="11" fill="#111" textLength="54.8" lengthAdjust="spacing">Возничий</text>
<text x="74.86" y="718.98" font-family='"DejaVu Sans", sans-serif' font-size="12.4" fill="#000">♂</text>
<text x="8.5" y="731.5" font-family='"DejaVu Sans", "Liberation Sans", sans-serif' font-size="11" fill="#111" textLength="64.7" lengthAdjust="spacing">Дорифорий</text>
<text x="85.55" y="730.76" font-family='"DejaVu Sans", sans-serif' font-size="13.2" fill="#000">☿</text>
<text x="8.5" y="744.4" font-family='"DejaVu Sans", "Liberation Sans", sans-serif' font-size="11" fill="#111" textLength="92.8" lengthAdjust="spacing">Альмутен карты</text>
<text x="113.35" y="743.96" font-family='"DejaVu Sans", sans-serif' font-size="13.2" fill="#000">☿</text>
</g>
<g id="titlebar">
<rect x="0" y="0" width="1366" height="22.7" fill="#c0a683"/>
<rect x="0" y="21.6" width="1366" height="1.1" fill="#9c8868"/>
<circle cx="9.1" cy="10.8" r="7.6" fill="#e8e4dc"/><circle cx="9.1" cy="10.8" r="6.8" fill="#2458b4"/><circle cx="7.2" cy="8" r="3.6" fill="#5c9cf0"/><circle cx="6.6" cy="7" r="1.6" fill="#bcdcff"/><path d="M7.8 17.6L15.4 8.2" stroke="#fff" stroke-width="2.2" fill="none"/>
<text x="461" y="17" font-family='"Liberation Sans", sans-serif' font-size="14.6" fill="#1c1c1c" textLength="439" lengthAdjust="spacing">ZET 9.2.59 Geo   22 марта 1982  Пн   5:27:25 GMT+6 41n20  69e18</text>
<rect x="1274" y="10" width="8" height="3" fill="#1c1208"/>
<path d="M1299.5 7.5h7v6h-7zM1301.5 7.5v-2.5h7v6h-2" fill="none" stroke="#1c1208" stroke-width="1.1"/><rect x="1299" y="7" width="8" height="2" fill="#1c1208"/>
<rect x="1318" y="0" width="45" height="19" fill="#c9504e"/>
<path d="M1337 5.6l8 8M1345 5.6l-8 8" stroke="#fff" stroke-width="1.9" fill="none"/>
</g>
<g id="status">
<rect x="0" y="747" width="1366" height="19" fill="#f0f0f0"/>
<rect x="0" y="766" width="1366" height="2" fill="#bfa683"/>
<rect x="55.3" y="766.4" width="42.7" height="1.6" fill="#d4d4d4"/>
<rect x="147.6" y="766.4" width="42.7" height="1.6" fill="#d4d4d4"/>
<rect x="193.7" y="766.4" width="42.2" height="1.6" fill="#d4d4d4"/>
<rect x="238.5" y="766.4" width="39.5" height="1.6" fill="#fbfbfb"/>
<rect x="283.3" y="766.4" width="44.8" height="1.6" fill="#d4d4d4"/>
<rect x="79.5" y="749" width="1" height="16" fill="#d2d2d2"/>
<rect x="159.5" y="749" width="1" height="16" fill="#d2d2d2"/>
<rect x="981" y="749" width="1" height="16" fill="#d2d2d2"/>
<rect x="1021.5" y="749" width="1" height="16" fill="#d2d2d2"/>
<rect x="1033" y="749" width="1" height="16" fill="#d2d2d2"/>
<rect x="1139" y="749" width="1" height="16" fill="#d2d2d2"/>
<rect x="1237" y="749" width="1" height="16" fill="#d2d2d2"/>
<rect x="986" y="751" width="15" height="15" fill="#008000"/>
<text x="2.6" y="763" font-family='"Liberation Sans", sans-serif' font-size="11.6" fill="#000" textLength="48" lengthAdjust="spacing">Традиция</text>
<text x="84.2" y="763" font-family='"Liberation Sans", sans-serif' font-size="11.6" fill="#000" textLength="62.3" lengthAdjust="spacing">II Запрягаев</text>
<text x="1144.6" y="763" font-family='"Liberation Sans", sans-serif' font-size="11.6" fill="#000" textLength="26.5" lengthAdjust="spacing">38.45</text>
<text x="1242" y="763" font-family='"Liberation Sans", sans-serif' font-size="11.6" fill="#000" textLength="120" lengthAdjust="spacing">UT: 2020.09.02 16:20:46</text>
</g>
<g id="table">
<text x="894" y="70.6" font-family='"Liberation Mono", monospace' font-size="12.4" fill="#000" text-anchor="middle" stroke="#000" stroke-width="0.35">R</text>
<text x="917.7" y="70.6" font-family='"Liberation Mono", monospace' font-size="12.4" fill="#000" text-anchor="middle" stroke="#000" stroke-width="0.35">E</text>
<text x="941.8" y="70.6" font-family='"Liberation Mono", monospace' font-size="12.4" fill="#000" text-anchor="middle" stroke="#000" stroke-width="0.35">T</text>
<text x="965.6" y="70.6" font-family='"Liberation Mono", monospace' font-size="12.4" fill="#000" text-anchor="middle" stroke="#000" stroke-width="0.35">t</text>
<text x="989.6" y="70.6" font-family='"Liberation Mono", monospace' font-size="12.4" fill="#000" text-anchor="middle" stroke="#000" stroke-width="0.35">f</text>
<text x="1013.6" y="70.6" font-family='"Liberation Mono", monospace' font-size="12.4" fill="#000" text-anchor="middle" stroke="#000" stroke-width="0.35">U</text>
<text x="1038" y="70.6" font-family='"Liberation Mono", monospace' font-size="12.4" fill="#000" text-anchor="middle" stroke="#000" stroke-width="0.35">H</text>
<text x="1054.5 1062.5 1070.5" y="70.6" font-family='"Liberation Mono", monospace' font-size="12.4" fill="#000" text-anchor="middle" stroke="#000" stroke-width="0.35">Alm</text>
<text x="1114 1122 1130" y="70.6" font-family='"Liberation Mono", monospace' font-size="12.4" fill="#000" text-anchor="middle" stroke="#000" stroke-width="0.35">Lat</text>
<text x="1170 1178" y="70.6" font-family='"Liberation Mono", monospace' font-size="12.4" fill="#000" text-anchor="middle" stroke="#000" stroke-width="0.35">V%</text>
<text x="1234" y="70.6" font-family='"Liberation Mono", monospace' font-size="12.4" fill="#000" text-anchor="middle" stroke="#000" stroke-width="0.35">V</text>
<text transform="translate(809.5 64.5) rotate(-45)" font-family='"Liberation Mono", monospace' font-size="12.4" fill="#333">Нат</text>
<rect x="770.4" y="77" width="11.6" height="4" fill="#1c9c1c"/>
<rect x="767" y="82" width="15" height="4" fill="#1c9c1c"/>
<text x="786.4" y="84.6" font-family='"Liberation Mono", monospace' font-size="12.2" fill="#202020">Э</text>
<text x="799.86" y="86.3" font-family='"DejaVu Sans", sans-serif' font-size="13.7" fill="#000" stroke="#000" stroke-width="0.2">☉</text>
<text x="838" y="84.6" font-family='"Liberation Mono", monospace' font-size="12.2" fill="#202020" text-anchor="middle">1</text>
<text x="845.25" y="85.94" font-family='"DejaVu Sans", sans-serif' font-size="13.5" fill="#000">♈</text>
<text x="874" y="84.6" font-family='"Liberation Mono", monospace' font-size="12.2" fill="#202020" text-anchor="middle">1</text>
<text x="888.41" y="85.64" font-family='"DejaVu Sans", sans-serif' font-size="12.3" fill="#000">♂</text>
<text x="911.56" y="86.3" font-family='"DejaVu Sans", sans-serif' font-size="13.7" fill="#c81818" stroke="#c81818" stroke-width="0.2">☉</text>
<text x="935.89" y="86.12" font-family='"DejaVu Sans", sans-serif' font-size="13.2" fill="#000">♃</text>
<text x="959.69" y="86.12" font-family='"DejaVu Sans", sans-serif' font-size="13.2" fill="#000">♃</text>
<text x="984.01" y="85.64" font-family='"DejaVu Sans", sans-serif' font-size="12.3" fill="#000">♂</text>
<text x="1007.55" y="86.24" font-family='"DejaVu Sans", sans-serif' font-size="13.5" fill="#c81818">♈</text>
<circle cx="1038" cy="81.3" r="5.2" fill="none" stroke="#000" stroke-width="1"/><circle cx="1038" cy="81.3" r="3" fill="none" stroke="#000" stroke-width="1"/>
<text transform="translate(1098 84.6) scale(1.55 1)" font-family='"Liberation Mono", monospace' font-size="12.2" fill="#202020" text-anchor="middle">-</text>
<text x="1122 1146" y="84.6" font-family='"Liberation Mono", monospace' font-size="12.2" fill="#202020" text-anchor="middle">°'</text>
<text x="1114 1138" y="84.6" font-family='"Liberation Sans", sans-serif' font-size="11.47" fill="#202020" text-anchor="middle">00</text>
<text x="1170 1186 1194" y="84.6" font-family='"Liberation Mono", monospace' font-size="12.2" fill="#202020" text-anchor="middle">11%</text>
<text x="1178" y="84.6" font-family='"Liberation Sans", sans-serif' font-size="11.47" fill="#202020" text-anchor="middle">0</text>
<text x="1218 1226 1234 1242 1250 1258" y="84.6" font-family='"Liberation Mono", monospace' font-size="12.2" fill="#202020" text-anchor="middle">59'35&quot;</text>
<rect x="767.3" y="95" width="14.7" height="4" fill="#e41c1c"/>
<rect x="764" y="100" width="18" height="4" fill="#1c9c1c"/>
<text transform="translate(806 99.3) scale(1.3 1)" x="-7.62" y="4.74" font-family='"DejaVu Sans", sans-serif' font-size="13" fill="#000" stroke="#000" stroke-width="0.3">☽</text>
<text x="830 838" y="102.6" font-family='"Liberation Mono", monospace' font-size="12.2" fill="#202020" text-anchor="middle">18</text>
<text x="843.91" y="105.04" font-family='"DejaVu Sans", sans-serif' font-size="16.5" fill="#000">♒</text>
<text x="866 874" y="102.6" font-family='"Liberation Mono", monospace' font-size="12.2" fill="#202020" text-anchor="middle">27</text>
<text x="887.06" y="104.96" font-family='"DejaVu Sans", sans-serif' font-size="15.5" fill="#000">♄</text>
<text x="937.5" y="103.71" font-family='"DejaVu Sans", sans-serif' font-size="14" fill="#000">☿</text>
<text x="961.28" y="102.88" font-family='"DejaVu Sans", sans-serif' font-size="11.8" fill="#000">♀</text>
<text x="985.3" y="103.71" font-family='"DejaVu Sans", sans-serif' font-size="14" fill="#000">☿</text>
<text x="1006.88" y="103.43" font-family='"DejaVu Sans", sans-serif' font-size="15" fill="#000">♍</text>
<text transform="translate(1098 102.6) scale(1.55 1)" font-family='"Liberation Mono", monospace' font-size="12.2" fill="#202020" text-anchor="middle">-</text>
<text x="1114 1122 1130 1138 1146" y="102.6" font-family='"Liberation Mono", monospace' font-size="12.2" fill="#202020" text-anchor="middle">2°25'</text>
<text x="1178 1186 1194" y="102.6" font-family='"Liberation Mono", monospace' font-size="12.2" fill="#202020" text-anchor="middle">96%</text>
<text x="1218 1226 1234 1242 1250 1258" y="102.6" font-family='"Liberation Mono", monospace' font-size="12.2" fill="#202020" text-anchor="middle">12°41'</text>
<rect x="755" y="113" width="27" height="4" fill="#e41c1c"/>
<rect x="740" y="118" width="42" height="4" fill="#1c9c1c"/>
<text x="786.4" y="120.6" font-family='"Liberation Mono", monospace' font-size="12.2" fill="#202020">И</text>
<text x="801.7" y="121.71" font-family='"DejaVu Sans", sans-serif' font-size="14" fill="#000">☿</text>
<text x="830 838" y="120.6" font-family='"Liberation Mono", monospace' font-size="12.2" fill="#202020" text-anchor="middle">12</text>
<text x="844.8" y="122.3" font-family='"DejaVu Sans", sans-serif' font-size="14.5" fill="#000">♓</text>
<text x="866 874" y="120.6" font-family='"Liberation Mono", monospace' font-size="12.2" fill="#202020" text-anchor="middle">42</text>
<text x="888.09" y="122.12" font-family='"DejaVu Sans", sans-serif' font-size="13.2" fill="#000">♃</text>
<text x="913.38" y="120.88" font-family='"DejaVu Sans", sans-serif' font-size="11.8" fill="#000">♀</text>
<text x="936.21" y="121.64" font-family='"DejaVu Sans", sans-serif' font-size="12.3" fill="#000">♂</text>
<text x="959.69" y="122.12" font-family='"DejaVu Sans", sans-serif' font-size="13.2" fill="#000">♃</text>
<text x="983.69" y="122.12" font-family='"DejaVu Sans", sans-serif' font-size="13.2" fill="#000">♃</text>
<text x="1006.66" y="122.96" font-family='"DejaVu Sans", sans-serif' font-size="15.5" fill="#000">♌</text>
<circle cx="1038" cy="117.3" r="4.7" fill="none" stroke="#000" stroke-width="1.1"/>
<text transform="translate(1098 120.6) scale(1.55 1)" font-family='"Liberation Mono", monospace' font-size="12.2" fill="#202020" text-anchor="middle">-</text>
<text x="1114 1122 1130 1138 1146" y="120.6" font-family='"Liberation Mono", monospace' font-size="12.2" fill="#202020" text-anchor="middle">2°18'</text>
<text x="1170 1178 1186 1194" y="120.6" font-family='"Liberation Mono", monospace' font-size="12.2" fill="#202020" text-anchor="middle">135%</text>
<text x="1226 1234 1242 1250 1258" y="120.6" font-family='"Liberation Mono", monospace' font-size="12.2" fill="#202020" text-anchor="middle">1°38'</text>
<rect x="761" y="131" width="21" height="4" fill="#1c9c1c"/>
<rect x="752" y="136" width="30" height="4" fill="#1c9c1c"/>
<text x="801.68" y="138.88" font-family='"DejaVu Sans", sans-serif' font-size="11.8" fill="#000">♀</text>
<text x="830 838" y="138.6" font-family='"Liberation Mono", monospace' font-size="12.2" fill="#202020" text-anchor="middle">15</text>
<text x="843.91" y="141.04" font-family='"DejaVu Sans", sans-serif' font-size="16.5" fill="#000">♒</text>
<text x="874" y="138.6" font-family='"Liberation Mono", monospace' font-size="12.2" fill="#202020" text-anchor="middle">4</text>
<text x="887.06" y="140.96" font-family='"DejaVu Sans", sans-serif' font-size="15.5" fill="#000">♄</text>
<text x="937.5" y="139.71" font-family='"DejaVu Sans", sans-serif' font-size="14" fill="#000">☿</text>
<text x="961.28" y="138.88" font-family='"DejaVu Sans", sans-serif' font-size="11.8" fill="#c81818">♀</text>
<text x="985.3" y="139.71" font-family='"DejaVu Sans", sans-serif' font-size="14" fill="#000">☿</text>
<text x="1006.66" y="140.96" font-family='"DejaVu Sans", sans-serif' font-size="15.5" fill="#000">♌</text>
<circle cx="1038" cy="135.3" r="4.7" fill="none" stroke="#000" stroke-width="1.1"/>
<text x="1114 1122 1130 1138 1146" y="138.6" font-family='"Liberation Mono", monospace' font-size="12.2" fill="#202020" text-anchor="middle">2°35'</text>
<text x="1178 1186 1194" y="138.6" font-family='"Liberation Mono", monospace' font-size="12.2" fill="#202020" text-anchor="middle">86%</text>
<text x="1218 1226 1234 1242 1250 1258" y="138.6" font-family='"Liberation Mono", monospace' font-size="12.2" fill="#202020" text-anchor="middle">53'56&quot;</text>
<rect x="767" y="149" width="15" height="4" fill="#e41c1c"/>
<rect x="776" y="154" width="6" height="4" fill="#e41c1c"/>
<text x="786.4" y="156.6" font-family='"Liberation Mono", monospace' font-size="12.2" fill="#202020">И</text>
<text x="798.91" y="157.64" font-family='"DejaVu Sans", sans-serif' font-size="12.3" fill="#000">♂</text>
<text x="811.3" y="158.8" font-family='"Liberation Sans", sans-serif' font-size="7" fill="#000" font-weight="bold">R</text>
<text x="830 838" y="156.6" font-family='"Liberation Mono", monospace' font-size="12.2" fill="#202020" text-anchor="middle">13</text>
<text x="844.58" y="158.29" font-family='"DejaVu Sans", sans-serif' font-size="15" fill="#000">♎</text>
<text x="866 874" y="156.6" font-family='"Liberation Mono", monospace' font-size="12.2" fill="#202020" text-anchor="middle">52</text>
<text x="889.68" y="156.88" font-family='"DejaVu Sans", sans-serif' font-size="11.8" fill="#000">♀</text>
<text x="910.76" y="158.96" font-family='"DejaVu Sans", sans-serif' font-size="15.5" fill="#000">♄</text>
<text x="937.5" y="157.71" font-family='"DejaVu Sans", sans-serif' font-size="14" fill="#000">☿</text>
<text x="961.3" y="157.71" font-family='"DejaVu Sans", sans-serif' font-size="14" fill="#000">☿</text>
<text x="982.66" y="158.96" font-family='"DejaVu Sans", sans-serif' font-size="15.5" fill="#000">♄</text>
<text x="1007.1" y="158.6" font-family='"DejaVu Sans", sans-serif' font-size="14.5" fill="#000">♓</text>
<circle cx="1038" cy="153.3" r="4.7" fill="none" stroke="#000" stroke-width="1.1"/>
<text x="1114 1122 1130 1146" y="156.6" font-family='"Liberation Mono", monospace' font-size="12.2" fill="#202020" text-anchor="middle">3°1'</text>
<text x="1138" y="156.6" font-family='"Liberation Sans", sans-serif' font-size="11.47" fill="#202020" text-anchor="middle">0</text>
<text transform="translate(1162 156.6) scale(1.55 1)" font-family='"Liberation Mono", monospace' font-size="12.2" fill="#202020" text-anchor="middle">-</text>
<text x="1178 1186 1194" y="156.6" font-family='"Liberation Mono", monospace' font-size="12.2" fill="#202020" text-anchor="middle">61%</text>
<text transform="translate(1210 156.6) scale(1.55 1)" font-family='"Liberation Mono", monospace' font-size="12.2" fill="#202020" text-anchor="middle">-</text>
<text x="1218 1234 1242 1250 1258" y="156.6" font-family='"Liberation Mono", monospace' font-size="12.2" fill="#202020" text-anchor="middle">2'37&quot;</text>
<text x="1226" y="156.6" font-family='"Liberation Sans", sans-serif' font-size="11.47" fill="#202020" text-anchor="middle">0</text>
<rect x="767" y="167" width="15" height="4" fill="#e41c1c"/>
<rect x="776" y="172" width="6" height="4" fill="#1c9c1c"/>
<text x="798.59" y="176.12" font-family='"DejaVu Sans", sans-serif' font-size="13.2" fill="#000">♃</text>
<text x="811.3" y="176.8" font-family='"Liberation Sans", sans-serif' font-size="7" fill="#000" font-weight="bold">R</text>
<text x="838" y="174.6" font-family='"Liberation Mono", monospace' font-size="12.2" fill="#202020" text-anchor="middle">9</text>
<text x="844.12" y="176.08" font-family='"DejaVu Sans", sans-serif' font-size="16" fill="#000">♏</text>
<text x="866 874" y="174.6" font-family='"Liberation Mono", monospace' font-size="12.2" fill="#202020" text-anchor="middle">19</text>
<text x="888.41" y="175.64" font-family='"DejaVu Sans", sans-serif' font-size="12.3" fill="#000">♂</text>
<text x="936.21" y="175.64" font-family='"DejaVu Sans", sans-serif' font-size="12.3" fill="#000">♂</text>
<text x="961.28" y="174.88" font-family='"DejaVu Sans", sans-serif' font-size="11.8" fill="#000">♀</text>
<text x="984.01" y="175.64" font-family='"DejaVu Sans", sans-serif' font-size="12.3" fill="#000">♂</text>
<text x="1006.21" y="177.34" font-family='"DejaVu Sans", sans-serif' font-size="16.5" fill="#000">♒</text>
<text x="1114 1122 1130 1138 1146" y="174.6" font-family='"Liberation Mono", monospace' font-size="12.2" fill="#202020" text-anchor="middle">1°25'</text>
<text transform="translate(1162 174.6) scale(1.55 1)" font-family='"Liberation Mono", monospace' font-size="12.2" fill="#202020" text-anchor="middle">-</text>
<text x="1178 1186 1194" y="174.6" font-family='"Liberation Mono", monospace' font-size="12.2" fill="#202020" text-anchor="middle">58%</text>
<text transform="translate(1210 174.6) scale(1.55 1)" font-family='"Liberation Mono", monospace' font-size="12.2" fill="#202020" text-anchor="middle">-</text>
<text x="1226 1234 1242 1250 1258" y="174.6" font-family='"Liberation Mono", monospace' font-size="12.2" fill="#202020" text-anchor="middle">4'36&quot;</text>
<rect x="755" y="185" width="27" height="4" fill="#1c9c1c"/>
<rect x="776" y="190" width="6" height="4" fill="#1c9c1c"/>
<text x="786.4" y="192.6" font-family='"Liberation Mono", monospace' font-size="12.2" fill="#202020">Э</text>
<text x="797.56" y="194.96" font-family='"DejaVu Sans", sans-serif' font-size="15.5" fill="#000">♄</text>
<text x="811.3" y="194.8" font-family='"Liberation Sans", sans-serif' font-size="7" fill="#000" font-weight="bold">R</text>
<text x="830" y="192.6" font-family='"Liberation Mono", monospace' font-size="12.2" fill="#202020" text-anchor="middle">2</text>
<text x="838" y="192.6" font-family='"Liberation Sans", sans-serif' font-size="11.47" fill="#202020" text-anchor="middle">0</text>
<text x="844.58" y="194.29" font-family='"DejaVu Sans", sans-serif' font-size="15" fill="#000">♎</text>
<text x="866 874" y="192.6" font-family='"Liberation Mono", monospace' font-size="12.2" fill="#202020" text-anchor="middle">17</text>
<text x="889.68" y="192.88" font-family='"DejaVu Sans", sans-serif' font-size="11.8" fill="#000">♀</text>
<text x="910.76" y="194.96" font-family='"DejaVu Sans", sans-serif' font-size="15.5" fill="#c81818">♄</text>
<text x="937.5" y="193.71" font-family='"DejaVu Sans", sans-serif' font-size="14" fill="#000">☿</text>
<text x="959.69" y="194.12" font-family='"DejaVu Sans", sans-serif' font-size="13.2" fill="#000">♃</text>
<text x="983.69" y="194.12" font-family='"DejaVu Sans", sans-serif' font-size="13.2" fill="#000">♃</text>
<text x="1007.11" y="194.6" font-family='"DejaVu Sans", sans-serif' font-size="14.5" fill="#000">♊</text>
<text x="1114 1122 1130 1138 1146" y="192.6" font-family='"Liberation Mono", monospace' font-size="12.2" fill="#202020" text-anchor="middle">2°45'</text>
<text transform="translate(1162 192.6) scale(1.55 1)" font-family='"Liberation Mono", monospace' font-size="12.2" fill="#202020" text-anchor="middle">-</text>
<text x="1170 1186 1194" y="192.6" font-family='"Liberation Mono", monospace' font-size="12.2" fill="#202020" text-anchor="middle">12%</text>
<text x="1178" y="192.6" font-family='"Liberation Sans", sans-serif' font-size="11.47" fill="#202020" text-anchor="middle">0</text>
<text transform="translate(1210 192.6) scale(1.55 1)" font-family='"Liberation Mono", monospace' font-size="12.2" fill="#202020" text-anchor="middle">-</text>
<text x="1226 1234 1242 1250 1258" y="192.6" font-family='"Liberation Mono", monospace' font-size="12.2" fill="#202020" text-anchor="middle">4'14&quot;</text>
<rect x="767" y="203" width="15" height="4" fill="#e41c1c"/>
<rect x="773" y="208" width="9" height="4" fill="#1c9c1c"/>
<text x="799.92" y="212.48" font-family='"DejaVu Sans", sans-serif' font-size="12.5" fill="#000">⛢</text>
<text x="811.3" y="212.8" font-family='"Liberation Sans", sans-serif' font-size="7" fill="#000" font-weight="bold">R</text>
<text x="838" y="210.6" font-family='"Liberation Mono", monospace' font-size="12.2" fill="#202020" text-anchor="middle">4</text>
<text x="845.25" y="211.93" font-family='"DejaVu Sans", sans-serif' font-size="13.5" fill="#000">♐</text>
<text x="866 874" y="210.6" font-family='"Liberation Mono", monospace' font-size="12.2" fill="#202020" text-anchor="middle">34</text>
<text x="888.09" y="212.12" font-family='"DejaVu Sans", sans-serif' font-size="13.2" fill="#000">♃</text>
<text x="935.89" y="212.12" font-family='"DejaVu Sans", sans-serif' font-size="13.2" fill="#000">♃</text>
<text x="959.69" y="212.12" font-family='"DejaVu Sans", sans-serif' font-size="13.2" fill="#000">♃</text>
<text x="985.3" y="211.71" font-family='"DejaVu Sans", sans-serif' font-size="14" fill="#000">☿</text>
<text x="1007.11" y="212.6" font-family='"DejaVu Sans", sans-serif' font-size="14.5" fill="#000">♑</text>
<text x="1122 1130 1146" y="210.6" font-family='"Liberation Mono", monospace' font-size="12.2" fill="#202020" text-anchor="middle">°1'</text>
<text x="1114 1138" y="210.6" font-family='"Liberation Sans", sans-serif' font-size="11.47" fill="#202020" text-anchor="middle">00</text>
<text transform="translate(1162 210.6) scale(1.55 1)" font-family='"Liberation Mono", monospace' font-size="12.2" fill="#202020" text-anchor="middle">-</text>
<text x="1178 1186 1194" y="210.6" font-family='"Liberation Mono", monospace' font-size="12.2" fill="#202020" text-anchor="middle">32%</text>
<text transform="translate(1210 210.6) scale(1.55 1)" font-family='"Liberation Mono", monospace' font-size="12.2" fill="#202020" text-anchor="middle">-</text>
<text x="1234 1242 1250 1258" y="210.6" font-family='"Liberation Mono", monospace' font-size="12.2" fill="#202020" text-anchor="middle">'38&quot;</text>
<text x="1226" y="210.6" font-family='"Liberation Sans", sans-serif' font-size="11.47" fill="#202020" text-anchor="middle">0</text>
<rect x="767" y="221" width="15" height="4" fill="#e41c1c"/>
<rect x="749" y="226" width="33" height="4" fill="#1c9c1c"/>
<text x="800.49" y="229.79" font-family='"DejaVu Sans", sans-serif' font-size="12.3" fill="#000">♆</text>
<text x="830 838" y="228.6" font-family='"Liberation Mono", monospace' font-size="12.2" fill="#202020" text-anchor="middle">27</text>
<text x="845.25" y="229.93" font-family='"DejaVu Sans", sans-serif' font-size="13.5" fill="#000">♐</text>
<text x="874" y="228.6" font-family='"Liberation Mono", monospace' font-size="12.2" fill="#202020" text-anchor="middle">2</text>
<text x="888.09" y="230.12" font-family='"DejaVu Sans", sans-serif' font-size="13.2" fill="#000">♃</text>
<text x="935.89" y="230.12" font-family='"DejaVu Sans", sans-serif' font-size="13.2" fill="#000">♃</text>
<text x="960.01" y="229.64" font-family='"DejaVu Sans", sans-serif' font-size="12.3" fill="#000">♂</text>
<text x="982.66" y="230.96" font-family='"DejaVu Sans", sans-serif' font-size="15.5" fill="#000">♄</text>
<text x="1006.88" y="230.59" font-family='"DejaVu Sans", sans-serif' font-size="15" fill="#000">♎</text>
<text x="1114 1122 1130 1138 1146" y="228.6" font-family='"Liberation Mono", monospace' font-size="12.2" fill="#202020" text-anchor="middle">1°17'</text>
<text x="1178 1194" y="228.6" font-family='"Liberation Mono", monospace' font-size="12.2" fill="#202020" text-anchor="middle">2%</text>
<text x="1186" y="228.6" font-family='"Liberation Sans", sans-serif' font-size="11.47" fill="#202020" text-anchor="middle">0</text>
<text x="1234 1242 1250 1258" y="228.6" font-family='"Liberation Mono", monospace' font-size="12.2" fill="#202020" text-anchor="middle">'16&quot;</text>
<text x="1226" y="228.6" font-family='"Liberation Sans", sans-serif' font-size="11.47" fill="#202020" text-anchor="middle">0</text>
<rect x="767" y="239" width="15" height="4" fill="#e41c1c"/>
<g transform="translate(805.5 243.8) scale(1)" fill="none" stroke="#000" stroke-width="1.05"><circle cx="0" cy="-2.6" r="1.9"/><path d="M-4.4 -5.2a4.4 4.4 0 0 0 8.8 0M0 -0.7v5.6M-2.8 2.6h5.6"/></g>
<text x="811.3" y="248.8" font-family='"Liberation Sans", sans-serif' font-size="7" fill="#000" font-weight="bold">R</text>
<text x="830 838" y="246.6" font-family='"Liberation Mono", monospace' font-size="12.2" fill="#202020" text-anchor="middle">26</text>
<text x="844.58" y="248.29" font-family='"DejaVu Sans", sans-serif' font-size="15" fill="#000">♎</text>
<text x="866 874" y="246.6" font-family='"Liberation Mono", monospace' font-size="12.2" fill="#202020" text-anchor="middle">13</text>
<text x="889.68" y="246.88" font-family='"DejaVu Sans", sans-serif' font-size="11.8" fill="#000">♀</text>
<text x="910.76" y="248.96" font-family='"DejaVu Sans", sans-serif' font-size="15.5" fill="#000">♄</text>
<text x="937.5" y="247.71" font-family='"DejaVu Sans", sans-serif' font-size="14" fill="#000">☿</text>
<text x="960.01" y="247.64" font-family='"DejaVu Sans", sans-serif' font-size="12.3" fill="#000">♂</text>
<text x="983.69" y="248.12" font-family='"DejaVu Sans", sans-serif' font-size="13.2" fill="#000">♃</text>
<text x="1006.66" y="248.96" font-family='"DejaVu Sans", sans-serif' font-size="15.5" fill="#000">♌</text>
<text x="1106 1114 1122 1130 1138 1146" y="246.6" font-family='"Liberation Mono", monospace' font-size="12.2" fill="#202020" text-anchor="middle">17°35'</text>
<text transform="translate(1162 246.6) scale(1.55 1)" font-family='"Liberation Mono", monospace' font-size="12.2" fill="#202020" text-anchor="middle">-</text>
<text x="1170 1178 1186 1194" y="246.6" font-family='"Liberation Mono", monospace' font-size="12.2" fill="#202020" text-anchor="middle">155%</text>
<text transform="translate(1210 246.6) scale(1.55 1)" font-family='"Liberation Mono", monospace' font-size="12.2" fill="#202020" text-anchor="middle">-</text>
<text x="1226 1234 1242 1250 1258" y="246.6" font-family='"Liberation Mono", monospace' font-size="12.2" fill="#202020" text-anchor="middle">1'29&quot;</text>
<text x="800.52" y="265.37" font-family='"DejaVu Sans", sans-serif' font-size="11.2" fill="#000">☊</text>
<text x="830 838" y="264.6" font-family='"Liberation Mono", monospace' font-size="12.2" fill="#202020" text-anchor="middle">19</text>
<text x="844.58" y="266.33" font-family='"DejaVu Sans", sans-serif' font-size="15" fill="#000">♋</text>
<text x="866 874" y="264.6" font-family='"Liberation Mono", monospace' font-size="12.2" fill="#202020" text-anchor="middle">53</text>
<text transform="translate(894 261.3) scale(1.3 1)" x="-7.62" y="4.74" font-family='"DejaVu Sans", sans-serif' font-size="13" fill="#000" stroke="#000" stroke-width="0.3">☽</text>
<text x="911.79" y="266.12" font-family='"DejaVu Sans", sans-serif' font-size="13.2" fill="#000">♃</text>
<text x="936.21" y="265.64" font-family='"DejaVu Sans", sans-serif' font-size="12.3" fill="#000">♂</text>
<text x="961.3" y="265.71" font-family='"DejaVu Sans", sans-serif' font-size="14" fill="#000">☿</text>
<text x="985.3" y="265.71" font-family='"DejaVu Sans", sans-serif' font-size="14" fill="#000">☿</text>
<text x="1006.21" y="267.34" font-family='"DejaVu Sans", sans-serif' font-size="16.5" fill="#000">♒</text>
<text x="1122 1146" y="264.6" font-family='"Liberation Mono", monospace' font-size="12.2" fill="#202020" text-anchor="middle">°'</text>
<text x="1114 1138" y="264.6" font-family='"Liberation Sans", sans-serif' font-size="11.47" fill="#202020" text-anchor="middle">00</text>
<text transform="translate(1162 264.6) scale(1.55 1)" font-family='"Liberation Mono", monospace' font-size="12.2" fill="#202020" text-anchor="middle">-</text>
<text x="1170 1178 1186 1194" y="264.6" font-family='"Liberation Mono", monospace' font-size="12.2" fill="#202020" text-anchor="middle">131%</text>
<text transform="translate(1210 264.6) scale(1.55 1)" font-family='"Liberation Mono", monospace' font-size="12.2" fill="#202020" text-anchor="middle">-</text>
<text x="1226 1234 1242 1250 1258" y="264.6" font-family='"Liberation Mono", monospace' font-size="12.2" fill="#202020" text-anchor="middle">4'39&quot;</text>
<text x="1274.6" y="264" font-family='"DejaVu Sans", "Liberation Sans", sans-serif' font-size="11" fill="#111">Кастор</text>
<text x="800.52" y="283.35" font-family='"DejaVu Sans", sans-serif' font-size="11.2" fill="#000">☋</text>
<text x="830 838" y="282.6" font-family='"Liberation Mono", monospace' font-size="12.2" fill="#202020" text-anchor="middle">19</text>
<text x="844.81" y="284.3" font-family='"DejaVu Sans", sans-serif' font-size="14.5" fill="#000">♑</text>
<text x="866 874" y="282.6" font-family='"Liberation Mono", monospace' font-size="12.2" fill="#202020" text-anchor="middle">53</text>
<text x="887.06" y="284.96" font-family='"DejaVu Sans", sans-serif' font-size="15.5" fill="#000">♄</text>
<text x="912.11" y="283.64" font-family='"DejaVu Sans", sans-serif' font-size="12.3" fill="#000">♂</text>
<text transform="translate(941.8 279.3) scale(1.3 1)" x="-7.62" y="4.74" font-family='"DejaVu Sans", sans-serif' font-size="13" fill="#000" stroke="#000" stroke-width="0.3">☽</text>
<text x="958.66" y="284.96" font-family='"DejaVu Sans", sans-serif' font-size="15.5" fill="#000">♄</text>
<text x="984.01" y="283.64" font-family='"DejaVu Sans", sans-serif' font-size="12.3" fill="#000">♂</text>
<text x="1006.66" y="284.96" font-family='"DejaVu Sans", sans-serif' font-size="15.5" fill="#000">♌</text>
<text transform="translate(1098 282.6) scale(1.55 1)" font-family='"Liberation Mono", monospace' font-size="12.2" fill="#202020" text-anchor="middle">-</text>
<text x="1122 1146" y="282.6" font-family='"Liberation Mono", monospace' font-size="12.2" fill="#202020" text-anchor="middle">°'</text>
<text x="1114 1138" y="282.6" font-family='"Liberation Sans", sans-serif' font-size="11.47" fill="#202020" text-anchor="middle">00</text>
<text transform="translate(1162 282.6) scale(1.55 1)" font-family='"Liberation Mono", monospace' font-size="12.2" fill="#202020" text-anchor="middle">-</text>
<text x="1170 1178 1186 1194" y="282.6" font-family='"Liberation Mono", monospace' font-size="12.2" fill="#202020" text-anchor="middle">131%</text>
<text transform="translate(1210 282.6) scale(1.55 1)" font-family='"Liberation Mono", monospace' font-size="12.2" fill="#202020" text-anchor="middle">-</text>
<text x="1226 1234 1242 1250 1258" y="282.6" font-family='"Liberation Mono", monospace' font-size="12.2" fill="#202020" text-anchor="middle">4'39&quot;</text>
<g stroke="#000" stroke-width="1.05" fill="none"><circle cx="805.7" cy="297.3" r="5.4"/><path d="M801.88 293.48l7.64 7.64M809.52 293.48l-7.64 7.64"/></g>
<text x="830 838" y="300.6" font-family='"Liberation Mono", monospace' font-size="12.2" fill="#202020" text-anchor="middle">29</text>
<text x="845.25" y="301.93" font-family='"DejaVu Sans", sans-serif' font-size="13.5" fill="#000">♐</text>
<text x="866 874" y="300.6" font-family='"Liberation Mono", monospace' font-size="12.2" fill="#202020" text-anchor="middle">39</text>
<text x="888.09" y="302.12" font-family='"DejaVu Sans", sans-serif' font-size="13.2" fill="#000">♃</text>
<text x="935.89" y="302.12" font-family='"DejaVu Sans", sans-serif' font-size="13.2" fill="#000">♃</text>
<text x="960.01" y="301.64" font-family='"DejaVu Sans", sans-serif' font-size="12.3" fill="#000">♂</text>
<text x="982.66" y="302.96" font-family='"DejaVu Sans", sans-serif' font-size="15.5" fill="#000">♄</text>
<text x="1006.42" y="302.38" font-family='"DejaVu Sans", sans-serif' font-size="16" fill="#000">♏</text>
<text x="1122 1146" y="300.6" font-family='"Liberation Mono", monospace' font-size="12.2" fill="#202020" text-anchor="middle">°'</text>
<text x="1114 1138" y="300.6" font-family='"Liberation Sans", sans-serif' font-size="11.47" fill="#202020" text-anchor="middle">00</text>
<text x="1234 1250 1258" y="300.6" font-family='"Liberation Mono", monospace' font-size="12.2" fill="#202020" text-anchor="middle">58°</text>
<text x="1242" y="300.6" font-family='"Liberation Sans", sans-serif' font-size="11.47" fill="#202020" text-anchor="middle">0</text>
<text x="1274.6" y="300" font-family='"DejaVu Sans", "Liberation Sans", sans-serif' font-size="11" fill="#111">Синистра</text>
<rect x="743" y="311" width="39" height="4" fill="#1c9c1c"/>
<g stroke="#000" stroke-width="1.05" fill="none"><circle cx="805.7" cy="315.3" r="5.4"/><path d="M800.3 315.3h10.8M805.7 309.9v10.8M801.88 311.48l7.64 7.64M809.52 311.48l-7.64 7.64"/></g>
<text x="830 838" y="318.6" font-family='"Liberation Mono", monospace' font-size="12.2" fill="#202020" text-anchor="middle">24</text>
<text x="844.8" y="320.3" font-family='"DejaVu Sans", sans-serif' font-size="14.5" fill="#000">♓</text>
<text x="866 874" y="318.6" font-family='"Liberation Mono", monospace' font-size="12.2" fill="#202020" text-anchor="middle">47</text>
<text x="888.09" y="320.12" font-family='"DejaVu Sans", sans-serif' font-size="13.2" fill="#000">♃</text>
<text x="913.38" y="318.88" font-family='"DejaVu Sans", sans-serif' font-size="11.8" fill="#000">♀</text>
<text x="936.21" y="319.64" font-family='"DejaVu Sans", sans-serif' font-size="12.3" fill="#000">♂</text>
<text x="960.01" y="319.64" font-family='"DejaVu Sans", sans-serif' font-size="12.3" fill="#000">♂</text>
<text x="984.01" y="319.64" font-family='"DejaVu Sans", sans-serif' font-size="12.3" fill="#000">♂</text>
<text x="1007.55" y="320.23" font-family='"DejaVu Sans", sans-serif' font-size="13.5" fill="#000">♐</text>
<text x="1122 1146" y="318.6" font-family='"Liberation Mono", monospace' font-size="12.2" fill="#202020" text-anchor="middle">°'</text>
<text x="1114 1138" y="318.6" font-family='"Liberation Sans", sans-serif' font-size="11.47" fill="#202020" text-anchor="middle">00</text>
<text x="1234 1242 1250 1258" y="318.6" font-family='"Liberation Mono", monospace' font-size="12.2" fill="#202020" text-anchor="middle">485°</text>
<text transform="translate(806 337.2) scale(0.68 1)" font-family='"Liberation Sans", sans-serif' font-size="12" fill="#000" text-anchor="middle">Asc</text>
<text x="830 838" y="336.6" font-family='"Liberation Mono", monospace' font-size="12.2" fill="#202020" text-anchor="middle">12</text>
<text x="843.91" y="339.04" font-family='"DejaVu Sans", sans-serif' font-size="16.5" fill="#000">♒</text>
<text x="866 874" y="336.6" font-family='"Liberation Mono", monospace' font-size="12.2" fill="#202020" text-anchor="middle">13</text>
<text x="887.06" y="338.96" font-family='"DejaVu Sans", sans-serif' font-size="15.5" fill="#000">♄</text>
<text x="937.5" y="337.71" font-family='"DejaVu Sans", sans-serif' font-size="14" fill="#000">☿</text>
<text x="961.28" y="336.88" font-family='"DejaVu Sans", sans-serif' font-size="11.8" fill="#000">♀</text>
<text x="985.3" y="337.71" font-family='"DejaVu Sans", sans-serif' font-size="14" fill="#000">☿</text>
<text x="1007.11" y="338.6" font-family='"DejaVu Sans", sans-serif' font-size="14.5" fill="#000">♊</text>
<text x="1054.46" y="338.96" font-family='"DejaVu Sans", sans-serif' font-size="15.5" fill="#000">♄</text>
<text x="1122 1146" y="336.6" font-family='"Liberation Mono", monospace' font-size="12.2" fill="#202020" text-anchor="middle">°'</text>
<text x="1114 1138" y="336.6" font-family='"Liberation Sans", sans-serif' font-size="11.47" fill="#202020" text-anchor="middle">00</text>
<text x="1226 1234 1242 1250 1258" y="336.6" font-family='"Liberation Mono", monospace' font-size="12.2" fill="#202020" text-anchor="middle">1°23'</text>
<rect x="799.5" y="346.7" width="12.5" height="9.6" fill="#fff" stroke="#000" stroke-width="1"/>
<text x="805.8" y="354.6" font-family='"Liberation Sans", sans-serif' font-size="9.3" fill="#000" text-anchor="middle">2</text>
<text x="838" y="354.6" font-family='"Liberation Sans", sans-serif' font-size="11.47" fill="#202020" text-anchor="middle">0</text>
<text x="845.25" y="355.94" font-family='"DejaVu Sans", sans-serif' font-size="13.5" fill="#000">♈</text>
<text x="866 874" y="354.6" font-family='"Liberation Mono", monospace' font-size="12.2" fill="#202020" text-anchor="middle">26</text>
<text x="888.41" y="355.64" font-family='"DejaVu Sans", sans-serif' font-size="12.3" fill="#000">♂</text>
<text x="911.56" y="356.3" font-family='"DejaVu Sans", sans-serif' font-size="13.7" fill="#000" stroke="#000" stroke-width="0.2">☉</text>
<text x="935.89" y="356.12" font-family='"DejaVu Sans", sans-serif' font-size="13.2" fill="#000">♃</text>
<text x="959.69" y="356.12" font-family='"DejaVu Sans", sans-serif' font-size="13.2" fill="#000">♃</text>
<text x="984.01" y="355.64" font-family='"DejaVu Sans", sans-serif' font-size="12.3" fill="#000">♂</text>
<text x="1007.55" y="356.24" font-family='"DejaVu Sans", sans-serif' font-size="13.5" fill="#c81818">♈</text>
<text x="1055.81" y="355.64" font-family='"DejaVu Sans", sans-serif' font-size="12.3" fill="#000">♂</text>
<text x="1122 1146" y="354.6" font-family='"Liberation Mono", monospace' font-size="12.2" fill="#202020" text-anchor="middle">°'</text>
<text x="1114 1138" y="354.6" font-family='"Liberation Sans", sans-serif' font-size="11.47" fill="#202020" text-anchor="middle">00</text>
<text x="1226 1234 1242 1250 1258" y="354.6" font-family='"Liberation Mono", monospace' font-size="12.2" fill="#202020" text-anchor="middle">1°28'</text>
<rect x="799.5" y="364.7" width="12.5" height="9.6" fill="#fff" stroke="#000" stroke-width="1"/>
<text x="805.8" y="372.6" font-family='"Liberation Sans", sans-serif' font-size="9.3" fill="#000" text-anchor="middle">3</text>
<text x="838" y="372.6" font-family='"Liberation Mono", monospace' font-size="12.2" fill="#202020" text-anchor="middle">6</text>
<text x="845.7" y="373.57" font-family='"DejaVu Sans", sans-serif' font-size="12.5" fill="#000">♉</text>
<text x="866 874" y="372.6" font-family='"Liberation Mono", monospace' font-size="12.2" fill="#202020" text-anchor="middle">45</text>
<text x="889.68" y="372.88" font-family='"DejaVu Sans", sans-serif' font-size="11.8" fill="#000">♀</text>
<text transform="translate(917.7 369.3) scale(1.3 1)" x="-7.62" y="4.74" font-family='"DejaVu Sans", sans-serif' font-size="13" fill="#000" stroke="#000" stroke-width="0.3">☽</text>
<text transform="translate(941.8 369.3) scale(1.3 1)" x="-7.62" y="4.74" font-family='"DejaVu Sans", sans-serif' font-size="13" fill="#000" stroke="#000" stroke-width="0.3">☽</text>
<text x="961.28" y="372.88" font-family='"DejaVu Sans", sans-serif' font-size="11.8" fill="#000">♀</text>
<text x="985.3" y="373.71" font-family='"DejaVu Sans", sans-serif' font-size="14" fill="#000">☿</text>
<text x="1006.88" y="374.63" font-family='"DejaVu Sans", sans-serif' font-size="15" fill="#000">♋</text>
<text transform="translate(1061.4 369.3) scale(1.3 1)" x="-7.62" y="4.74" font-family='"DejaVu Sans", sans-serif' font-size="13" fill="#000" stroke="#000" stroke-width="0.3">☽</text>
<text x="1075.28" y="372.88" font-family='"DejaVu Sans", sans-serif' font-size="11.8" fill="#000">♀</text>
<text x="1122 1146" y="372.6" font-family='"Liberation Mono", monospace' font-size="12.2" fill="#202020" text-anchor="middle">°'</text>
<text x="1114 1138" y="372.6" font-family='"Liberation Sans", sans-serif' font-size="11.47" fill="#202020" text-anchor="middle">00</text>
<text x="1226 1234 1250 1258" y="372.6" font-family='"Liberation Mono", monospace' font-size="12.2" fill="#202020" text-anchor="middle">1°9'</text>
<text x="1274.6" y="372" font-family='"DejaVu Sans", "Liberation Sans", sans-serif' font-size="11" fill="#111">Металлах</text>
<text transform="translate(806 391.2) scale(0.68 1)" font-family='"Liberation Sans", sans-serif' font-size="12" fill="#000" text-anchor="middle">IC</text>
<text x="838" y="390.6" font-family='"Liberation Mono", monospace' font-size="12.2" fill="#202020" text-anchor="middle">2</text>
<text x="844.81" y="392.3" font-family='"DejaVu Sans", sans-serif' font-size="14.5" fill="#000">♊</text>
<text x="866 874" y="390.6" font-family='"Liberation Mono", monospace' font-size="12.2" fill="#202020" text-anchor="middle">23</text>
<text x="889.7" y="391.71" font-family='"DejaVu Sans", sans-serif' font-size="14" fill="#000">☿</text>
<text x="937.5" y="391.71" font-family='"DejaVu Sans", sans-serif' font-size="14" fill="#000">☿</text>
<text x="961.3" y="391.71" font-family='"DejaVu Sans", sans-serif' font-size="14" fill="#000">☿</text>
<text x="983.69" y="392.12" font-family='"DejaVu Sans", sans-serif' font-size="13.2" fill="#000">♃</text>
<text x="1007.11" y="392.6" font-family='"DejaVu Sans", sans-serif' font-size="14.5" fill="#c81818">♊</text>
<text x="1057.1" y="391.71" font-family='"DejaVu Sans", sans-serif' font-size="14" fill="#000">☿</text>
<text x="1122 1146" y="390.6" font-family='"Liberation Mono", monospace' font-size="12.2" fill="#202020" text-anchor="middle">°'</text>
<text x="1114 1138" y="390.6" font-family='"Liberation Sans", sans-serif' font-size="11.47" fill="#202020" text-anchor="middle">00</text>
<text x="1218 1226 1234 1242 1250 1258" y="390.6" font-family='"Liberation Mono", monospace' font-size="12.2" fill="#202020" text-anchor="middle">57'26&quot;</text>
<rect x="799.5" y="400.7" width="12.5" height="9.6" fill="#fff" stroke="#000" stroke-width="1"/>
<text x="805.8" y="408.6" font-family='"Liberation Sans", sans-serif' font-size="9.3" fill="#000" text-anchor="middle">5</text>
<text x="830 838" y="408.6" font-family='"Liberation Mono", monospace' font-size="12.2" fill="#202020" text-anchor="middle">23</text>
<text x="844.81" y="410.3" font-family='"DejaVu Sans", sans-serif' font-size="14.5" fill="#000">♊</text>
<text x="866 874" y="408.6" font-family='"Liberation Mono", monospace' font-size="12.2" fill="#202020" text-anchor="middle">31</text>
<text x="889.7" y="409.71" font-family='"DejaVu Sans", sans-serif' font-size="14" fill="#000">☿</text>
<text x="937.5" y="409.71" font-family='"DejaVu Sans", sans-serif' font-size="14" fill="#000">☿</text>
<text x="960.01" y="409.64" font-family='"DejaVu Sans", sans-serif' font-size="12.3" fill="#000">♂</text>
<text x="983.46" y="410.3" font-family='"DejaVu Sans", sans-serif' font-size="13.7" fill="#000" stroke="#000" stroke-width="0.2">☉</text>
<text x="1007.1" y="410.6" font-family='"DejaVu Sans", sans-serif' font-size="14.5" fill="#000">♓</text>
<text x="1057.1" y="409.71" font-family='"DejaVu Sans", sans-serif' font-size="14" fill="#000">☿</text>
<text x="1122 1146" y="408.6" font-family='"Liberation Mono", monospace' font-size="12.2" fill="#202020" text-anchor="middle">°'</text>
<text x="1114 1138" y="408.6" font-family='"Liberation Sans", sans-serif' font-size="11.47" fill="#202020" text-anchor="middle">00</text>
<text x="1218 1226 1234 1242 1250 1258" y="408.6" font-family='"Liberation Mono", monospace' font-size="12.2" fill="#202020" text-anchor="middle">54'25&quot;</text>
<text x="1274.6" y="408" font-family='"DejaVu Sans", "Liberation Sans", sans-serif' font-size="11" fill="#111">Мейсса</text>
<rect x="799.5" y="418.7" width="12.5" height="9.6" fill="#fff" stroke="#000" stroke-width="1"/>
<text x="805.8" y="426.6" font-family='"Liberation Sans", sans-serif' font-size="9.3" fill="#000" text-anchor="middle">6</text>
<text x="830 838" y="426.6" font-family='"Liberation Mono", monospace' font-size="12.2" fill="#202020" text-anchor="middle">14</text>
<text x="844.58" y="428.33" font-family='"DejaVu Sans", sans-serif' font-size="15" fill="#000">♋</text>
<text x="866 874" y="426.6" font-family='"Liberation Mono", monospace' font-size="12.2" fill="#202020" text-anchor="middle">48</text>
<text transform="translate(894 423.3) scale(1.3 1)" x="-7.62" y="4.74" font-family='"DejaVu Sans", sans-serif' font-size="13" fill="#000" stroke="#000" stroke-width="0.3">☽</text>
<text x="911.79" y="428.12" font-family='"DejaVu Sans", sans-serif' font-size="13.2" fill="#000">♃</text>
<text x="936.21" y="427.64" font-family='"DejaVu Sans", sans-serif' font-size="12.3" fill="#000">♂</text>
<text x="961.3" y="427.71" font-family='"DejaVu Sans", sans-serif' font-size="14" fill="#000">☿</text>
<text x="985.3" y="427.71" font-family='"DejaVu Sans", sans-serif' font-size="14" fill="#000">☿</text>
<text x="1007.55" y="428.23" font-family='"DejaVu Sans", sans-serif' font-size="13.5" fill="#000">♐</text>
<text transform="translate(1061.4 423.3) scale(1.3 1)" x="-7.62" y="4.74" font-family='"DejaVu Sans", sans-serif' font-size="13" fill="#000" stroke="#000" stroke-width="0.3">☽</text>
<text x="1122 1146" y="426.6" font-family='"Liberation Mono", monospace' font-size="12.2" fill="#202020" text-anchor="middle">°'</text>
<text x="1114 1138" y="426.6" font-family='"Liberation Sans", sans-serif' font-size="11.47" fill="#202020" text-anchor="middle">00</text>
<text x="1226 1234 1258" y="426.6" font-family='"Liberation Mono", monospace' font-size="12.2" fill="#202020" text-anchor="middle">1°'</text>
<text x="1250" y="426.6" font-family='"Liberation Sans", sans-serif' font-size="11.47" fill="#202020" text-anchor="middle">0</text>
<text x="1274.6" y="426" font-family='"DejaVu Sans", "Liberation Sans", sans-serif' font-size="11" fill="#111">Сириус</text>
<text transform="translate(806 445.2) scale(0.68 1)" font-family='"Liberation Sans", sans-serif' font-size="12" fill="#000" text-anchor="middle">Dsc</text>
<text x="830 838" y="444.6" font-family='"Liberation Mono", monospace' font-size="12.2" fill="#202020" text-anchor="middle">12</text>
<text x="844.36" y="446.66" font-family='"DejaVu Sans", sans-serif' font-size="15.5" fill="#000">♌</text>
<text x="866 874" y="444.6" font-family='"Liberation Mono", monospace' font-size="12.2" fill="#202020" text-anchor="middle">13</text>
<text x="887.86" y="446.3" font-family='"DejaVu Sans", sans-serif' font-size="13.7" fill="#000" stroke="#000" stroke-width="0.2">☉</text>
<text x="935.89" y="446.12" font-family='"DejaVu Sans", sans-serif' font-size="13.2" fill="#000">♃</text>
<text x="961.3" y="445.71" font-family='"DejaVu Sans", sans-serif' font-size="14" fill="#000">☿</text>
<text x="983.69" y="446.12" font-family='"DejaVu Sans", sans-serif' font-size="13.2" fill="#000">♃</text>
<text x="1007.55" y="446.23" font-family='"DejaVu Sans", sans-serif' font-size="13.5" fill="#000">♐</text>
<text x="1055.26" y="446.3" font-family='"DejaVu Sans", sans-serif' font-size="13.7" fill="#000" stroke="#000" stroke-width="0.2">☉</text>
<text x="1122 1146" y="444.6" font-family='"Liberation Mono", monospace' font-size="12.2" fill="#202020" text-anchor="middle">°'</text>
<text x="1114 1138" y="444.6" font-family='"Liberation Sans", sans-serif' font-size="11.47" fill="#202020" text-anchor="middle">00</text>
<text x="1226 1234 1242 1250 1258" y="444.6" font-family='"Liberation Mono", monospace' font-size="12.2" fill="#202020" text-anchor="middle">1°23'</text>
<rect x="799.5" y="454.7" width="12.5" height="9.6" fill="#fff" stroke="#000" stroke-width="1"/>
<text x="805.8" y="462.6" font-family='"Liberation Sans", sans-serif' font-size="9.3" fill="#000" text-anchor="middle">8</text>
<text x="838" y="462.6" font-family='"Liberation Sans", sans-serif' font-size="11.47" fill="#202020" text-anchor="middle">0</text>
<text x="844.58" y="464.29" font-family='"DejaVu Sans", sans-serif' font-size="15" fill="#000">♎</text>
<text x="866 874" y="462.6" font-family='"Liberation Mono", monospace' font-size="12.2" fill="#202020" text-anchor="middle">26</text>
<text x="889.68" y="462.88" font-family='"DejaVu Sans", sans-serif' font-size="11.8" fill="#000">♀</text>
<text x="910.76" y="464.96" font-family='"DejaVu Sans", sans-serif' font-size="15.5" fill="#000">♄</text>
<text x="937.5" y="463.71" font-family='"DejaVu Sans", sans-serif' font-size="14" fill="#000">☿</text>
<text x="958.66" y="464.96" font-family='"DejaVu Sans", sans-serif' font-size="15.5" fill="#000">♄</text>
<text transform="translate(989.6 459.3) scale(1.3 1)" x="-7.62" y="4.74" font-family='"DejaVu Sans", sans-serif' font-size="13" fill="#000" stroke="#000" stroke-width="0.3">☽</text>
<text x="1006.88" y="464.59" font-family='"DejaVu Sans", sans-serif' font-size="15" fill="#c81818">♎</text>
<line x1="1007.6" y1="464.5" x2="1019.6" y2="464.5" stroke="#c81818" stroke-width="1"/>
<text x="1054.46" y="464.96" font-family='"DejaVu Sans", sans-serif' font-size="15.5" fill="#000">♄</text>
<text x="1122 1146" y="462.6" font-family='"Liberation Mono", monospace' font-size="12.2" fill="#202020" text-anchor="middle">°'</text>
<text x="1114 1138" y="462.6" font-family='"Liberation Sans", sans-serif' font-size="11.47" fill="#202020" text-anchor="middle">00</text>
<text x="1226 1234 1242 1250 1258" y="462.6" font-family='"Liberation Mono", monospace' font-size="12.2" fill="#202020" text-anchor="middle">1°28'</text>
<rect x="799.5" y="472.7" width="12.5" height="9.6" fill="#fff" stroke="#000" stroke-width="1"/>
<text x="805.8" y="480.6" font-family='"Liberation Sans", sans-serif' font-size="9.3" fill="#000" text-anchor="middle">9</text>
<text x="838" y="480.6" font-family='"Liberation Mono", monospace' font-size="12.2" fill="#202020" text-anchor="middle">6</text>
<text x="844.12" y="482.08" font-family='"DejaVu Sans", sans-serif' font-size="16" fill="#000">♏</text>
<text x="866 874" y="480.6" font-family='"Liberation Mono", monospace' font-size="12.2" fill="#202020" text-anchor="middle">45</text>
<text x="888.41" y="481.64" font-family='"DejaVu Sans", sans-serif' font-size="12.3" fill="#000">♂</text>
<text x="936.21" y="481.64" font-family='"DejaVu Sans", sans-serif' font-size="12.3" fill="#000">♂</text>
<text x="961.28" y="480.88" font-family='"DejaVu Sans", sans-serif' font-size="11.8" fill="#000">♀</text>
<text x="984.01" y="481.64" font-family='"DejaVu Sans", sans-serif' font-size="12.3" fill="#000">♂</text>
<text x="1007.11" y="482.6" font-family='"DejaVu Sans", sans-serif' font-size="14.5" fill="#000">♑</text>
<text x="1055.81" y="481.64" font-family='"DejaVu Sans", sans-serif' font-size="12.3" fill="#000">♂</text>
<text x="1122 1146" y="480.6" font-family='"Liberation Mono", monospace' font-size="12.2" fill="#202020" text-anchor="middle">°'</text>
<text x="1114 1138" y="480.6" font-family='"Liberation Sans", sans-serif' font-size="11.47" fill="#202020" text-anchor="middle">00</text>
<text x="1226 1234 1250 1258" y="480.6" font-family='"Liberation Mono", monospace' font-size="12.2" fill="#202020" text-anchor="middle">1°9'</text>
<text x="1274.6" y="480" font-family='"DejaVu Sans", "Liberation Sans", sans-serif' font-size="11" fill="#111">Гакрукс</text>
<text transform="translate(806 499.2) scale(0.68 1)" font-family='"Liberation Sans", sans-serif' font-size="12" fill="#000" text-anchor="middle">MC</text>
<text x="838" y="498.6" font-family='"Liberation Mono", monospace' font-size="12.2" fill="#202020" text-anchor="middle">2</text>
<text x="845.25" y="499.93" font-family='"DejaVu Sans", sans-serif' font-size="13.5" fill="#000">♐</text>
<text x="866 874" y="498.6" font-family='"Liberation Mono", monospace' font-size="12.2" fill="#202020" text-anchor="middle">23</text>
<text x="888.09" y="500.12" font-family='"DejaVu Sans", sans-serif' font-size="13.2" fill="#000">♃</text>
<text x="935.89" y="500.12" font-family='"DejaVu Sans", sans-serif' font-size="13.2" fill="#000">♃</text>
<text x="959.69" y="500.12" font-family='"DejaVu Sans", sans-serif' font-size="13.2" fill="#000">♃</text>
<text x="985.3" y="499.71" font-family='"DejaVu Sans", sans-serif' font-size="14" fill="#000">☿</text>
<text x="1007.55" y="500.23" font-family='"DejaVu Sans", sans-serif' font-size="13.5" fill="#c81818">♐</text>
<text x="1055.49" y="500.12" font-family='"DejaVu Sans", sans-serif' font-size="13.2" fill="#000">♃</text>
<text x="1122 1146" y="498.6" font-family='"Liberation Mono", monospace' font-size="12.2" fill="#202020" text-anchor="middle">°'</text>
<text x="1114 1138" y="498.6" font-family='"Liberation Sans", sans-serif' font-size="11.47" fill="#202020" text-anchor="middle">00</text>
<text x="1218 1226 1234 1242 1250 1258" y="498.6" font-family='"Liberation Mono", monospace' font-size="12.2" fill="#202020" text-anchor="middle">57'26&quot;</text>
<text x="1274.6" y="498" font-family='"DejaVu Sans", "Liberation Sans", sans-serif' font-size="11" fill="#111">Джубба</text>
<rect x="799.5" y="508.7" width="12.5" height="9.6" fill="#fff" stroke="#000" stroke-width="1"/>
<text transform="translate(805.8 516.6) scale(0.8 1)" font-family='"Liberation Sans", sans-serif' font-size="9.3" fill="#000" text-anchor="middle">11</text>
<text x="830 838" y="516.6" font-family='"Liberation Mono", monospace' font-size="12.2" fill="#202020" text-anchor="middle">23</text>
<text x="845.25" y="517.93" font-family='"DejaVu Sans", sans-serif' font-size="13.5" fill="#000">♐</text>
<text x="866 874" y="516.6" font-family='"Liberation Mono", monospace' font-size="12.2" fill="#202020" text-anchor="middle">31</text>
<text x="888.09" y="518.12" font-family='"DejaVu Sans", sans-serif' font-size="13.2" fill="#000">♃</text>
<text x="935.89" y="518.12" font-family='"DejaVu Sans", sans-serif' font-size="13.2" fill="#000">♃</text>
<text x="958.66" y="518.96" font-family='"DejaVu Sans", sans-serif' font-size="15.5" fill="#000">♄</text>
<text x="982.66" y="518.96" font-family='"DejaVu Sans", sans-serif' font-size="15.5" fill="#000">♄</text>
<text x="1006.88" y="517.43" font-family='"DejaVu Sans", sans-serif' font-size="15" fill="#000">♍</text>
<text x="1055.49" y="518.12" font-family='"DejaVu Sans", sans-serif' font-size="13.2" fill="#000">♃</text>
<text x="1122 1146" y="516.6" font-family='"Liberation Mono", monospace' font-size="12.2" fill="#202020" text-anchor="middle">°'</text>
<text x="1114 1138" y="516.6" font-family='"Liberation Sans", sans-serif' font-size="11.47" fill="#202020" text-anchor="middle">00</text>
<text x="1218 1226 1234 1242 1250 1258" y="516.6" font-family='"Liberation Mono", monospace' font-size="12.2" fill="#202020" text-anchor="middle">54'25&quot;</text>
<rect x="799.5" y="526.7" width="12.5" height="9.6" fill="#fff" stroke="#000" stroke-width="1"/>
<text transform="translate(805.8 534.6) scale(0.8 1)" font-family='"Liberation Sans", sans-serif' font-size="9.3" fill="#000" text-anchor="middle">12</text>
<text x="830 838" y="534.6" font-family='"Liberation Mono", monospace' font-size="12.2" fill="#202020" text-anchor="middle">14</text>
<text x="844.81" y="536.3" font-family='"DejaVu Sans", sans-serif' font-size="14.5" fill="#000">♑</text>
<text x="866 874" y="534.6" font-family='"Liberation Mono", monospace' font-size="12.2" fill="#202020" text-anchor="middle">48</text>
<text x="887.06" y="536.96" font-family='"DejaVu Sans", sans-serif' font-size="15.5" fill="#000">♄</text>
<text x="912.11" y="535.64" font-family='"DejaVu Sans", sans-serif' font-size="12.3" fill="#000">♂</text>
<text transform="translate(941.8 531.3) scale(1.3 1)" x="-7.62" y="4.74" font-family='"DejaVu Sans", sans-serif' font-size="13" fill="#000" stroke="#000" stroke-width="0.3">☽</text>
<text x="959.69" y="536.12" font-family='"DejaVu Sans", sans-serif' font-size="13.2" fill="#000">♃</text>
<text x="984.01" y="535.64" font-family='"DejaVu Sans", sans-serif' font-size="12.3" fill="#000">♂</text>
<text x="1007.11" y="536.6" font-family='"DejaVu Sans", sans-serif' font-size="14.5" fill="#000">♊</text>
<text x="1055.81" y="535.64" font-family='"DejaVu Sans", sans-serif' font-size="12.3" fill="#000">♂</text>
<text x="1072.66" y="536.96" font-family='"DejaVu Sans", sans-serif' font-size="15.5" fill="#000">♄</text>
<text x="1122 1146" y="534.6" font-family='"Liberation Mono", monospace' font-size="12.2" fill="#202020" text-anchor="middle">°'</text>
<text x="1114 1138" y="534.6" font-family='"Liberation Sans", sans-serif' font-size="11.47" fill="#202020" text-anchor="middle">00</text>
<text x="1226 1234 1258" y="534.6" font-family='"Liberation Mono", monospace' font-size="12.2" fill="#202020" text-anchor="middle">1°'</text>
<text x="1250" y="534.6" font-family='"Liberation Sans", sans-serif' font-size="11.47" fill="#202020" text-anchor="middle">0</text>
<text x="1274.6" y="534" font-family='"DejaVu Sans", "Liberation Sans", sans-serif' font-size="11" fill="#111">Вега</text>
</g>
<g id="misc">
<text x="1304.08" y="571.28" font-family='"DejaVu Sans", sans-serif' font-size="11.8" fill="#000">♀</text>
<text x="1321.3" y="572" font-family='"DejaVu Sans", "Liberation Sans", sans-serif' font-size="11" fill="#111" text-anchor="middle">=</text>
<text x="1326.86" y="572.26" font-family='"DejaVu Sans", sans-serif' font-size="15.5" fill="#000">♄</text>
<text x="1297.2" y="589.41" font-family='"DejaVu Sans", sans-serif' font-size="14" fill="#000">☿</text>
<text x="1313.5" y="589.6" font-family='"DejaVu Sans", "Liberation Sans", sans-serif' font-size="11" fill="#111" text-anchor="middle">p</text>
<text x="1320.21" y="589.84" font-family='"DejaVu Sans", sans-serif' font-size="12.3" fill="#000">♂</text>
<path d="M888.3 676.3L896.3 676.3L898.6 686.7L886 686.7Z" fill="none" stroke="#000" stroke-width="1.05"/><rect x="891.8" y="681" width="1.2" height="1.2" fill="#000"/>
<path d="M909.3 676.3L917.3 676.3L919.6 686.7L907 686.7Z M913.3 676.3v10.4 M908 681.5h10.6" fill="none" stroke="#000" stroke-width="1.05"/>
<path d="M930.4 676.3L938.4 676.3L940.7 686.7L928.1 686.7Z M934.4 676.3L939.6 681.5L934.4 686.7L929.2 681.5Z" fill="none" stroke="#000" stroke-width="1.05"/>
<circle cx="976.9" cy="681.5" r="6.4" fill="none" stroke="#000" stroke-width="1.05"/>
<path d="M972.3 681.5a4.6 4.6 0 0 1 9.2 0z" fill="none" stroke="#000" stroke-width="1.05"/>
<circle cx="997.8" cy="681.5" r="6.4" fill="none" stroke="#000" stroke-width="1.05"/>
<path d="M993.2 681.5a4.6 4.6 0 0 0 9.2 0z" fill="none" stroke="#000" stroke-width="1.05"/>
<circle cx="1018.9" cy="681.5" r="6.4" fill="none" stroke="#000" stroke-width="1.05"/>
<path d="M1018.9 676.9a4.6 4.6 0 0 0 0 9.2z" fill="none" stroke="#000" stroke-width="1.05"/>
<circle cx="1039.8" cy="681.5" r="6.4" fill="none" stroke="#000" stroke-width="1.05"/>
<path d="M1039.8 676.9a4.6 4.6 0 0 1 0 9.2z" fill="none" stroke="#000" stroke-width="1.05"/>
<rect x="886.1" y="712.3" width="12.4" height="10.2" fill="none" stroke="#000" stroke-width="1.05"/>
<rect x="907.1" y="712.3" width="12.4" height="10.2" fill="none" stroke="#000" stroke-width="1.05"/>
<rect x="928.2" y="712.3" width="12.4" height="10.2" fill="none" stroke="#000" stroke-width="1.05"/>
<rect x="891.8" y="717" width="1.2" height="1.2" fill="#000"/>
<path d="M913.3 712.3v10.2M907.1 717.4h12.4" fill="none" stroke="#000" stroke-width="1.05"/>
<path d="M934.4 712.3L940.6 717.4L934.4 722.5L928.2 717.4Z" fill="none" stroke="#000" stroke-width="1.05"/>
<path d="M976.9 712.6L982 721.6L971.8 721.6Z" fill="none" stroke="#000" stroke-width="1.05"/>
<path d="M997.8 722.2L1002.9 713.2L992.7 713.2Z" fill="none" stroke="#000" stroke-width="1.05"/>
<path d="M1018.9 712.6L1024 721.6L1013.8 721.6Z" fill="none" stroke="#000" stroke-width="1.05"/>
<path d="M1015.3 718.8h7.2" fill="none" stroke="#000" stroke-width="1.05"/>
<path d="M1039.8 722.2L1044.9 713.2L1034.7 713.2Z" fill="none" stroke="#000" stroke-width="1.05"/>
<path d="M1036.2 716h7.2" fill="none" stroke="#000" stroke-width="1.05"/>
<text x="892.3" y="701.8" font-family='"DejaVu Sans", "Liberation Sans", sans-serif' font-size="11" fill="#111" text-anchor="middle">4</text>
<text x="913.3" y="701.8" font-family='"DejaVu Sans", "Liberation Sans", sans-serif' font-size="11" fill="#111" text-anchor="middle">5</text>
<text x="934.4" y="701.8" font-family='"DejaVu Sans", "Liberation Sans", sans-serif' font-size="11" fill="#111" text-anchor="middle">1</text>
<text x="976.9" y="701.8" font-family='"DejaVu Sans", "Liberation Sans", sans-serif' font-size="11" fill="#111" text-anchor="middle">6</text>
<text x="997.8" y="701.8" font-family='"DejaVu Sans", "Liberation Sans", sans-serif' font-size="11" fill="#111" text-anchor="middle">4</text>
<text x="1018.9" y="701.8" font-family='"DejaVu Sans", "Liberation Sans", sans-serif' font-size="11" fill="#111" text-anchor="middle">6</text>
<text x="1039.8" y="701.8" font-family='"DejaVu Sans", "Liberation Sans", sans-serif' font-size="11" fill="#111" text-anchor="middle">4</text>
<text x="892.3" y="737.6" font-family='"DejaVu Sans", "Liberation Sans", sans-serif' font-size="11" fill="#111" text-anchor="middle">4</text>
<text x="913.3" y="737.6" font-family='"DejaVu Sans", "Liberation Sans", sans-serif' font-size="11" fill="#111" text-anchor="middle">3</text>
<text x="934.4" y="737.6" font-family='"DejaVu Sans", "Liberation Sans", sans-serif' font-size="11" fill="#111" text-anchor="middle">3</text>
<text x="976.9" y="737.6" font-family='"DejaVu Sans", "Liberation Sans", sans-serif' font-size="11" fill="#111" text-anchor="middle">3</text>
<text x="997.8" y="737.6" font-family='"DejaVu Sans", "Liberation Sans", sans-serif' font-size="11" fill="#111" text-anchor="middle">0</text>
<text x="1018.9" y="737.6" font-family='"DejaVu Sans", "Liberation Sans", sans-serif' font-size="11" fill="#111" text-anchor="middle">5</text>
<text x="1039.8" y="737.6" font-family='"DejaVu Sans", "Liberation Sans", sans-serif' font-size="11" fill="#111" text-anchor="middle">2</text>
</g>
</svg>
</body></html>
